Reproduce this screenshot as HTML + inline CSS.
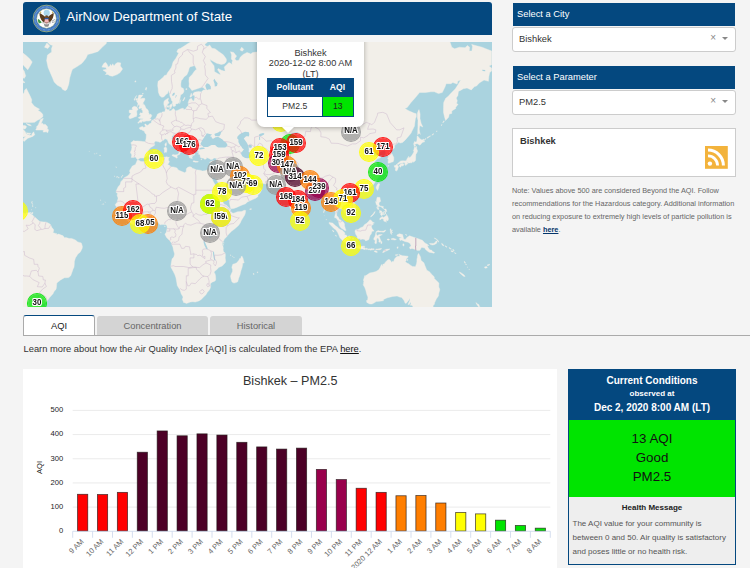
<!DOCTYPE html>
<html lang="en">
<head>
<meta charset="utf-8">
<title>AirNow Department of State</title>
<style>
html,body{margin:0;padding:0;}
body{width:750px;height:568px;overflow:hidden;background:#f4f4f4;font-family:"Liberation Sans",Arial,sans-serif;color:#222;position:relative;}
.abs{position:absolute;}
.hdr{left:23px;top:2px;width:469px;height:33px;background:#04487f;border-radius:3px 3px 0 0;}
.hdr .ttl{position:absolute;left:43.3px;top:6.1px;font-size:13.33px;color:#fff;white-space:nowrap;line-height:17px;}
.map{left:23px;top:42px;width:469px;height:265px;background:#aad3df;overflow:hidden;}
.mk{position:absolute;width:20px;height:20px;border-radius:50%;box-sizing:border-box;border:1.6px solid;background-clip:padding-box;}
.ml{position:absolute;width:40px;text-align:center;font-size:9.2px;font-weight:bold;line-height:11px;color:#111;transform:scaleX(.86);text-shadow:-1px -1px 0 #fff,1px -1px 0 #fff,-1px 1px 0 #fff,1px 1px 0 #fff,0 -1px 0 #fff,0 1px 0 #fff,-1px 0 0 #fff,1px 0 0 #fff;}
.pop{position:absolute;left:234px;top:-10px;width:107px;height:95px;background:#fff;border-radius:7px;box-shadow:0 1px 5px rgba(0,0,0,.3);}
.pop .pt{position:absolute;left:0;top:16px;width:107px;text-align:center;font-size:9.2px;line-height:10.3px;color:#333;white-space:nowrap;}
.pop table{position:absolute;left:10px;top:46px;width:87px;border:1px solid #04487f;border-collapse:collapse;}
.pop th{background:#04487f;color:#fff;font-size:8.6px;font-weight:bold;height:16.6px;padding:0;text-align:center;}
.pop td{font-size:8.6px;color:#333;height:19.4px;padding:0;text-align:center;background:#fff;border:1px solid #04487f;}
.pop td.g{background:#00e400;color:#222;}
.tip{position:absolute;left:258.5px;top:85px;width:0;height:0;border-left:6.8px solid transparent;border-right:6.8px solid transparent;border-top:6.4px solid #fff;filter:drop-shadow(0 2px 2px rgba(0,0,0,.25));}
.bar{background:#04487f;color:#fff;font-size:9.33px;line-height:23px;padding-left:4px;box-sizing:border-box;white-space:nowrap;}
.sel{background:#fff;border:1px solid #ccc;border-radius:3px;box-sizing:border-box;font-size:9.33px;color:#333;line-height:22px;padding-left:6px;white-space:nowrap;}
.sel .x{position:absolute;right:19px;top:-1px;font-size:10px;color:#888;}
.sel .car{position:absolute;right:7px;top:9.2px;width:0;height:0;border-left:3px solid transparent;border-right:3px solid transparent;border-top:3px solid #888;}
.note{left:512px;top:184px;width:226px;font-size:7.33px;line-height:13px;color:#666;}
.note a,.learn a{color:#04356b;font-weight:bold;text-decoration:underline;}
.tab{top:315px;height:20px;box-sizing:border-box;font-size:9.33px;text-align:center;line-height:22px;border-radius:3px 3px 0 0;}
.tab.on{background:#fff;border:1px solid #aaa;border-top:1.5px solid #04487f;border-bottom:none;color:#222;line-height:20px;}
.tab.off{background:#d4d4d4;color:#666;top:315.6px;height:19.4px;line-height:21px;}
.learn{left:23.5px;top:344px;font-size:9.33px;line-height:11px;color:#333;white-space:nowrap;}
.learn a{font-weight:normal;color:#111;}
.chart{left:23px;top:369px;width:534px;height:199px;background:#fff;}
.cc{left:568px;top:369px;width:168px;height:196px;background:#eeeeee;border:1px solid #04487f;box-sizing:border-box;}
.cc .top{position:absolute;left:0;top:0;width:100%;height:49.5px;background:#04487f;color:#fff;text-align:center;font-weight:bold;}
.cc .grn{position:absolute;left:0;top:49.5px;width:100%;height:77px;background:#00e400;text-align:center;color:#111;}
</style>
</head>
<body>
<div class="abs hdr">
<svg class="abs" style="left:9px;top:2px" width="29" height="29" viewBox="-14.5 -14.5 29 29">
<circle r="13.4" fill="#356fbe" stroke="#aab572" stroke-width="0.8"/>
<circle r="11.5" fill="none" stroke="#8db3e6" stroke-width="1.5" stroke-dasharray="0.7 0.6" opacity=".8"/>
<circle r="9.7" fill="#fdfdfd" stroke="#c9cf8a" stroke-width="0.5"/>
<circle cx="0.2" cy="-5.6" r="3.1" fill="#a9d5ea"/>
<path d="M-1.2 -1.5C-3.5 -3.2 -5.6 -5.2 -7 -5.4C-7.2 -2.5 -6 1.2 -3.4 3.6L-1.4 3Z" fill="#5a3a1c"/>
<path d="M1.4 -1.5C3.7 -3.2 5.8 -5.2 7.2 -5.4C7.4 -2.5 6.2 1.2 3.6 3.6L1.6 3Z" fill="#5a3a1c"/>
<path d="M-1.3 -2.6Q0.1 -4 1.5 -2.6L1.8 0H-1.6Z" fill="#6b4a2a"/>
<path d="M-6.6 -5.6l0.9 -1.6l0.6 1.8zM6.8 -5.6l-0.9 -1.6l-0.6 1.8z" fill="#c9b24a"/>
<rect x="-1.9" y="-0.6" width="4" height="1.7" fill="#2c57a6"/>
<path d="M-1.9 1.1h4v1.6q0 1.9 -2 2.6q-2 -0.7 -2 -2.6z" fill="#ee8b8f"/>
<path d="M-1.1 1.1v3.2M-0.3 1.1v3.9M0.5 1.1v3.9M1.3 1.1v3.2" stroke="#fff" stroke-width="0.35"/>
<path d="M-8.4 0.5q1.2 0.3 2 1.6q1.2 0.8 1.6 2.2q-1.6 0.9 -3 0.1q-1.2 -1.6 -0.6 -3.9z" fill="#3f9a4a"/>
<path d="M5 2.2l3.4 -1.6l0.3 0.7l-3.2 2zM5.4 3.4l3.6 -0.6l0.1 0.7l-3.5 1z" fill="#a9a9a9"/>
<path d="M-2.6 5.2q2.7 1.2 5.4 0l-0.7 2.6q-2 1 -4 0z" fill="#8d8d8d"/>
<path d="M-4 4.3h8.2" stroke="#4a3520" stroke-width="0.5"/>
</svg>

<div class="ttl">AirNow Department of State</div>
</div>
<div class="abs map">
<svg class="abs" style="left:0;top:0" width="469" height="265" viewBox="0 0 469 265"><path fill="#f2efe9" stroke="#f2efe9" stroke-width="0.4" stroke-linejoin="round" d="M114.2 118.2L115.3 118.0L118.0 119.6L119.9 119.4L121.6 119.8L124.3 118.3L126.0 117.3L128.2 116.4L131.1 115.9L135.1 115.9L137.3 115.1L140.2 115.6L144.2 114.7L144.9 115.6L146.4 115.1L145.4 116.8L145.5 118.2L146.4 119.6L145.9 120.8L144.6 122.6L146.3 123.3L148.2 124.9L150.4 124.9L154.0 126.0L155.0 127.8L156.9 128.7L159.5 129.8L161.8 130.7L163.3 129.3L163.3 126.7L164.8 125.3L166.5 124.8L168.3 125.1L169.4 126.2L170.9 126.7L173.2 127.8L177.0 128.2L179.4 129.0L182.1 128.7L184.2 127.8L186.1 128.2L186.7 128.5L187.1 131.4L187.3 132.4L187.8 134.1L188.7 135.9L189.5 137.4L189.9 138.4L190.4 139.7L191.6 141.8L192.7 144.3L192.9 145.8L194.8 147.8L195.6 150.3L195.9 153.1L196.3 154.1L197.3 155.5L198.6 156.3L199.5 159.1L200.3 161.0L201.3 162.2L203.5 163.2L205.0 165.0L206.4 166.1L207.5 167.1L207.1 168.9L207.9 169.4L209.2 171.0L210.7 171.2L212.6 170.4L214.5 169.8L218.7 169.4L221.2 168.3L222.7 168.5L222.3 171.2L221.7 172.9L220.0 175.8L218.3 178.6L217.4 180.7L215.5 183.4L213.0 185.7L211.3 187.2L208.8 189.1L206.0 191.8L204.1 194.2L203.0 195.4L201.4 197.1L200.7 198.7L199.5 200.7L199.0 202.8L199.9 203.9L200.3 206.2L200.1 207.9L200.7 210.1L202.0 210.8L202.4 213.0L202.2 215.9L202.6 218.8L202.6 220.2L201.1 222.1L199.2 223.9L195.6 225.5L194.2 227.3L191.6 229.3L191.2 230.7L192.0 231.7L192.5 233.8L192.7 235.8L192.7 237.7L192.1 238.9L189.1 240.2L187.2 241.9L187.8 243.8L187.2 246.3L186.3 248.1L184.2 250.5L183.0 252.7L181.3 254.2L178.3 257.4L175.8 258.9L173.9 259.5L172.4 260.1L169.8 259.7L167.3 260.1L163.3 261.5L162.0 260.7L160.5 260.4L160.3 259.4L159.3 257.4L160.1 255.1L158.2 251.8L157.4 249.2L156.7 247.6L154.2 243.4L153.7 240.0L152.9 235.7L151.9 232.8L150.4 229.7L148.2 225.7L147.8 224.2L148.4 220.2L149.1 216.8L150.8 215.1L151.6 212.0L150.4 207.8L149.9 204.9L148.7 202.4L148.5 201.6L147.9 200.1L146.4 198.4L145.6 197.5L143.6 195.6L141.9 192.3L143.3 190.2L143.6 189.1L143.9 187.5L144.2 185.5L143.8 183.4L142.3 182.5L141.1 182.5L138.7 182.6L137.0 182.8L135.6 181.1L134.9 179.8L133.7 178.9L131.8 178.8L130.0 178.9L127.7 179.4L125.0 180.5L121.4 182.0L119.5 181.3L117.8 181.0L114.0 181.7L110.8 182.6L108.3 181.5L104.9 179.0L103.6 177.9L101.7 176.7L100.4 174.8L99.4 172.9L97.7 171.0L96.8 170.0L95.1 168.5L93.7 167.3L93.7 165.4L92.2 162.8L94.1 160.3L95.1 156.1L94.1 153.5L94.5 151.3L93.1 150.5L93.4 148.6L95.2 144.7L97.1 142.6L97.9 139.7L100.0 137.4L100.9 135.9L104.4 133.9L106.1 132.6L107.2 130.4L106.7 129.9L106.8 128.0L108.0 126.2L109.3 124.1L111.0 123.3L112.5 122.4L113.7 119.6ZM218.9 213.9L220.0 216.3L220.8 219.4L221.2 220.8L219.8 221.0L219.5 223.3L219.1 225.3L217.9 228.9L217.0 232.8L215.7 236.2L214.7 239.8L213.0 240.6L210.9 241.1L209.0 240.0L208.1 237.1L207.5 234.2L208.1 232.4L209.4 229.7L209.6 227.7L208.8 225.3L209.8 222.3L211.7 221.7L213.4 221.0L214.9 219.6L216.2 217.8L216.4 216.8L217.9 216.3L218.1 214.7ZM186.7 128.5L189.5 128.8L190.6 128.0L191.3 126.8L191.8 125.1L192.7 122.6L193.3 121.3L193.5 118.9L193.3 117.0L194.0 116.1L192.9 116.3L191.0 115.9L189.3 117.4L187.6 117.6L186.1 116.4L183.6 115.6L183.2 117.0L181.5 117.3L180.6 116.2L179.0 115.9L177.4 115.4L177.1 113.4L176.2 112.0L175.3 112.3L176.2 110.6L176.0 109.8L176.4 109.2L174.9 109.3L175.1 108.1L174.9 107.4L176.2 106.6L174.8 106.4L174.5 106.0L171.7 105.7L170.5 106.4L170.9 107.1L171.7 107.7L170.7 107.4L170.9 108.2L169.8 108.1L169.6 107.5L168.9 106.7L168.3 107.1L168.3 108.1L168.9 109.6L169.6 110.1L168.8 110.6L168.2 110.8L169.6 111.7L170.9 112.7L171.0 113.8L170.2 113.1L169.0 113.2L169.4 114.0L170.0 114.4L169.4 114.7L168.6 114.1L168.8 115.1L169.1 116.1L169.4 116.7L168.5 115.9L168.1 116.8L167.4 115.4L166.5 115.9L166.4 114.9L165.8 113.8L165.9 112.5L166.6 112.3L166.0 112.1L165.2 111.7L164.7 110.7L163.8 109.3L163.3 108.5L162.2 107.1L162.3 104.9L162.1 103.5L160.7 102.1L159.7 101.4L158.0 100.3L156.6 99.2L155.6 98.7L154.2 97.6L153.7 95.2L152.8 94.4L151.8 95.8L151.1 94.0L151.5 93.5L151.0 93.1L148.8 94.2L149.1 95.4L148.7 96.8L149.3 97.8L151.0 98.9L151.9 101.3L153.3 102.7L154.2 103.2L156.1 103.3L155.6 104.2L157.4 105.4L159.4 106.5L160.5 107.7L160.2 108.6L159.5 108.1L158.0 107.0L156.9 108.1L156.8 109.0L157.9 110.3L156.9 111.1L156.8 112.0L155.8 113.1L155.1 112.7L155.5 111.5L156.1 110.8L155.8 109.7L155.2 108.1L154.4 108.0L153.7 107.2L153.4 106.5L152.6 106.6L152.4 106.0L151.1 105.1L149.3 104.5L148.6 103.7L147.8 102.8L146.4 102.1L145.3 100.6L144.9 99.1L144.1 97.6L142.3 96.8L141.5 97.1L140.6 98.2L139.2 98.7L138.7 99.1L138.0 100.0L136.7 100.3L135.5 99.7L134.3 99.6L132.8 99.1L131.3 100.3L131.2 101.3L131.7 102.3L131.5 103.3L129.6 104.6L127.8 105.4L127.0 106.4L125.4 108.2L124.8 109.5L125.8 111.2L124.5 112.1L124.1 113.8L122.4 114.4L121.2 116.1L118.8 116.1L117.1 116.1L116.1 116.6L115.3 117.4L114.8 117.7L113.5 116.6L113.3 115.9L112.2 114.9L110.4 115.4L108.3 115.4L108.7 113.1L108.5 111.9L107.4 111.1L107.6 109.7L108.5 107.7L108.9 105.2L108.6 103.8L108.7 102.6L107.8 100.8L109.5 99.5L110.4 98.6L112.1 99.1L114.6 98.9L118.2 99.3L119.7 99.6L121.6 99.7L122.5 99.2L123.1 96.2L123.3 93.8L123.2 92.1L122.0 91.2L121.2 89.1L119.5 88.4L119.0 87.8L117.2 87.5L116.5 86.8L116.4 85.8L117.8 85.0L119.7 84.5L120.3 85.4L121.6 85.1L122.6 85.1L122.4 84.5L121.7 82.1L123.0 82.1L123.2 83.1L124.9 83.2L125.6 82.7L126.1 81.9L127.5 81.3L128.4 80.6L128.4 79.0L128.9 78.4L130.0 78.1L131.5 77.1L132.2 76.8L133.2 75.2L134.0 73.6L134.4 72.2L135.6 71.4L137.2 70.8L138.7 70.9L139.1 70.0L140.6 69.8L141.1 70.1L141.9 69.2L142.3 67.4L141.7 65.9L141.3 63.9L140.8 62.2L140.9 59.8L141.7 58.5L144.3 56.7L145.5 56.2L145.4 57.2L144.9 58.8L146.2 60.9L144.8 61.7L143.9 63.8L143.4 63.9L143.3 66.3L144.6 67.7L146.4 67.6L146.1 69.0L147.1 69.0L148.3 68.4L149.1 67.4L150.8 66.6L151.3 67.2L152.3 69.0L154.9 68.2L157.4 66.9L158.7 66.4L160.3 66.3L160.8 67.7L163.1 66.7L163.2 65.8L165.4 63.3L165.2 60.5L166.3 57.4L168.3 56.2L169.6 58.5L170.5 59.0L171.1 58.6L171.6 56.2L171.9 53.8L170.0 53.1L170.0 51.8L171.0 50.4L172.3 50.0L175.7 49.6L178.6 50.0L179.3 49.0L180.4 48.1L182.7 48.1L182.2 47.5L179.8 45.2L177.0 45.8L172.7 47.3L168.9 48.5L167.5 46.4L165.9 44.8L166.2 41.7L165.9 39.1L166.2 35.6L169.2 32.4L171.8 28.7L173.6 27.3L172.0 23.9L171.2 23.7L167.5 24.8L166.2 26.0L165.6 28.7L163.9 32.8L161.0 34.9L159.4 37.4L158.3 38.5L157.9 41.3L157.8 42.9L158.0 45.2L160.4 46.6L161.0 48.9L160.5 50.5L159.4 52.0L157.7 52.7L157.0 56.2L156.6 57.9L156.4 60.0L155.0 61.7L153.6 61.7L152.5 62.6L152.6 63.8L151.6 64.3L150.3 64.4L150.0 63.6L149.5 62.1L149.0 61.2L149.8 60.0L148.6 58.5L148.0 56.3L147.0 54.4L146.5 51.8L146.2 51.1L145.7 48.3L145.1 49.8L144.5 51.6L143.2 52.2L142.0 53.7L140.6 54.9L138.8 55.3L136.8 53.7L136.0 51.8L135.4 50.2L135.1 46.4L134.7 43.7L134.8 41.7L135.1 39.3L137.0 38.1L138.7 36.4L140.0 35.6L141.5 33.4L143.6 33.0L144.4 30.9L146.6 28.0L148.5 25.3L149.3 22.8L150.1 19.9L152.7 16.5L154.4 13.5L155.7 11.0L153.8 10.0L155.0 7.3L157.6 6.3L161.2 4.1L164.3 1.9L166.2 0.8L170.3 -1.2L174.3 -4.1L177.9 -3.8L181.3 -2.1L184.4 0.2L181.8 2.2L182.4 3.8L184.8 4.4L186.7 3.0L188.9 6.3L192.0 6.8L195.6 9.4L200.3 12.8L203.0 16.5L203.5 18.0L203.1 19.9L201.3 21.8L198.4 22.5L193.7 21.3L190.4 19.4L186.8 17.3L188.0 19.9L191.0 23.7L191.4 27.3L191.4 29.5L194.2 31.3L196.5 32.4L197.6 32.2L196.1 30.0L194.6 27.8L195.2 26.6L198.4 28.2L200.9 29.1L202.2 29.1L201.3 25.1L204.1 22.3L206.0 20.6L208.3 21.8L209.2 22.8L209.0 20.4L209.6 18.5L208.3 17.0L208.6 13.0L207.5 9.7L210.7 10.5L212.6 13.0L213.6 14.0L211.7 17.0L213.8 18.7L215.9 18.2L217.4 15.0L220.2 12.5L224.0 10.5L226.9 11.5L227.8 12.0L229.7 10.5L233.5 10.0L237.3 11.0L239.2 9.4L239.7 4.1L242.4 3.8L247.7 6.3L248.7 7.3L251.5 9.4L254.9 12.0L256.2 10.5L254.3 5.2L252.5 2.4L252.5 -9.2L256.2 -15.5L263.5 -14.9L263.8 -6.2L263.1 2.4L262.9 7.9L264.8 13.0L262.9 19.9L259.1 20.9L261.9 21.8L265.3 18.5L265.7 15.5L267.2 10.5L270.5 9.4L272.4 15.0L274.3 15.5L272.4 11.5L270.5 7.9L266.7 7.3L265.3 2.4L265.7 -3.2L268.6 -9.2L273.3 -11.1L280.9 -7.4L283.4 -2.1L283.7 0.8L284.7 -2.1L282.8 -6.2L278.1 -18.8L296.1 -33.0L322.6 -51.1L339.7 -36.9L328.3 -18.8L337.8 -20.8L340.6 -18.8L352.0 -15.5L365.3 -18.8L370.0 -6.8L373.8 -2.1L377.6 -6.2L383.3 -6.2L389.0 -6.2L390.9 -12.3L396.6 -11.1L402.3 -11.1L409.8 -6.2L413.6 -2.7L421.2 -3.2L426.9 -0.4L428.8 5.2L431.7 6.8L436.4 5.2L442.1 5.7L444.5 3.6L446.6 5.2L446.3 8.9L448.9 8.9L449.5 4.6L448.7 2.4L453.5 3.8L459.1 5.2L462.9 6.8L468.6 8.9L468.6 22.8L466.0 23.9L468.6 26.0L468.6 29.1L466.7 30.4L465.8 34.7L465.4 39.3L461.0 38.1L456.3 40.9L453.5 44.1L451.6 44.5L448.3 47.9L444.0 46.0L440.2 46.8L438.3 47.9L435.4 49.4L434.9 53.5L433.2 56.0L434.3 58.8L433.5 61.6L435.1 62.2L432.6 65.6L432.8 66.4L428.8 68.9L428.8 71.4L426.3 72.0L425.6 75.2L422.6 78.5L421.6 75.2L420.5 70.5L420.5 65.6L420.7 60.5L422.7 56.3L425.0 54.6L428.2 50.9L432.4 46.8L435.4 42.1L437.7 38.1L434.9 38.9L434.1 42.1L429.8 40.5L427.9 41.7L423.1 41.7L422.2 44.5L419.3 50.5L415.5 51.6L411.4 49.8L407.9 49.8L402.3 50.5L396.6 50.5L391.8 56.3L388.0 60.5L384.2 65.6L381.8 66.6L386.1 68.9L388.0 69.8L390.9 71.1L393.2 71.7L393.3 74.5L392.4 76.7L391.8 81.2L391.5 84.1L389.0 88.9L388.0 91.2L384.6 95.2L382.3 97.9L379.5 100.5L377.4 101.0L375.5 100.3L373.2 102.3L371.5 103.6L371.4 106.1L369.1 107.9L367.4 108.6L367.1 110.2L368.9 111.5L369.8 113.6L370.8 115.4L370.8 117.7L370.2 119.8L368.1 120.3L367.6 120.8L365.1 121.2L365.1 118.9L365.5 117.7L364.5 115.9L365.7 115.1L365.5 114.2L363.8 113.0L361.9 112.7L362.8 111.3L362.4 109.3L361.3 108.4L358.6 109.1L356.0 110.8L355.2 109.3L357.1 106.5L355.0 105.9L354.7 106.4L352.2 108.4L350.9 110.3L348.7 110.6L348.6 112.0L351.2 113.6L351.1 114.9L353.0 114.2L354.4 113.5L355.6 114.1L357.0 114.2L357.9 114.7L357.5 115.7L354.9 116.6L353.6 117.6L352.1 119.1L351.6 120.6L353.5 121.7L354.7 124.6L356.6 127.6L356.6 129.1L354.9 130.0L354.7 130.7L356.2 131.3L356.7 131.5L356.7 133.3L356.0 134.6L354.7 135.9L353.3 138.0L352.2 139.9L351.2 141.6L350.5 142.4L349.4 143.2L346.8 145.4L344.4 146.8L342.0 147.6L340.7 147.9L338.7 148.8L337.4 149.0L334.9 149.8L334.4 151.7L333.5 150.5L333.4 149.2L332.3 149.3L330.9 149.0L330.2 149.2L327.9 150.9L327.5 151.9L326.2 152.7L325.9 154.9L327.4 156.7L329.6 159.2L330.7 160.1L331.9 161.8L332.6 164.6L333.0 166.3L332.5 167.6L332.1 168.9L330.4 170.2L328.5 171.3L327.8 171.9L327.4 172.9L325.5 173.9L324.0 174.6L324.2 172.3L324.7 171.9L323.5 171.2L321.7 170.8L320.7 169.0L319.9 167.7L318.8 167.1L317.5 166.8L316.7 166.8L316.7 165.9L316.0 165.2L315.0 165.7L314.9 167.0L314.7 168.5L313.6 171.0L313.8 173.5L315.1 174.9L315.6 175.8L316.2 177.3L317.5 177.9L318.5 178.8L319.3 179.2L321.0 180.8L321.6 182.5L321.5 183.7L322.3 186.4L323.1 188.3L322.2 188.5L321.7 188.4L320.5 187.6L319.3 186.8L318.4 186.3L317.5 185.3L316.5 183.8L316.2 183.0L315.7 180.7L315.6 179.4L315.0 178.6L313.9 177.1L312.9 175.7L311.8 176.0L311.7 174.6L312.4 172.0L312.4 170.0L312.4 167.2L311.4 164.1L310.8 161.7L310.5 159.3L309.3 158.3L308.0 159.1L306.3 160.7L304.2 160.5L304.4 158.3L304.6 156.3L304.2 155.3L302.8 153.5L301.6 152.0L299.8 149.3L299.5 147.6L298.0 147.0L297.0 148.0L295.1 148.6L292.8 148.9L291.3 149.0L290.5 149.3L289.8 151.7L288.2 152.7L286.4 153.8L283.4 156.9L281.4 158.4L281.5 159.2L279.3 160.0L278.8 160.7L277.3 161.3L277.4 163.3L277.7 165.9L276.8 168.2L276.8 171.4L275.8 171.5L275.1 172.5L275.2 173.4L273.6 174.2L272.5 175.6L271.2 174.8L270.6 174.1L270.0 172.0L269.0 169.5L268.3 168.4L267.2 166.3L265.9 162.6L265.3 161.2L264.4 158.3L263.5 154.4L263.5 151.5L263.2 150.0L263.1 147.8L262.3 148.7L260.0 150.9L258.8 150.5L257.4 148.9L256.1 147.7L258.1 147.1L258.5 146.2L256.9 146.5L255.8 144.9L253.4 144.3L252.4 142.4L251.6 141.2L248.0 141.6L245.7 141.5L243.6 141.7L242.5 141.9L240.3 141.4L237.3 141.2L235.0 140.6L233.5 138.2L232.1 137.5L229.5 138.7L226.9 138.4L224.1 136.1L221.8 133.6L221.2 132.3L218.7 130.7L217.5 131.4L216.3 132.6L217.2 134.6L219.6 137.8L220.5 139.0L220.6 140.8L221.6 142.5L221.7 141.0L222.5 139.6L223.2 141.4L223.2 142.7L222.7 143.5L225.3 143.9L228.5 143.2L230.3 141.5L231.5 140.3L232.2 139.2L232.2 140.8L232.3 141.8L233.0 143.4L236.4 144.9L238.3 147.1L238.8 147.2L237.9 149.4L236.7 151.5L234.8 153.0L235.0 154.5L232.7 156.3L230.3 157.3L228.0 158.3L224.4 159.9L222.6 161.8L218.6 163.2L216.4 164.2L213.6 165.4L210.7 166.5L207.9 166.8L207.4 165.5L206.8 162.6L206.6 161.6L206.4 159.5L206.1 158.5L203.3 154.1L201.8 152.0L199.6 149.2L199.4 146.6L197.6 143.9L195.9 141.9L194.5 139.4L193.1 137.0L191.8 135.4L191.0 135.7L191.8 132.4L190.4 136.0L190.3 136.2L189.1 135.1L188.2 133.4L187.1 131.4ZM114.6 81.0L115.0 80.6L115.7 80.0L116.9 78.2L117.6 77.6L119.5 77.6L120.3 76.7L119.3 76.8L117.8 76.4L117.2 76.5L115.7 76.2L115.3 75.5L116.5 74.9L117.6 73.9L117.7 73.0L116.4 72.7L117.2 71.6L116.7 71.1L117.2 70.8L118.2 71.1L119.5 70.9L119.7 70.6L119.7 70.0L119.6 69.5L120.0 68.5L119.2 68.5L118.6 67.2L119.0 65.9L119.7 65.8L118.6 66.1L117.7 66.3L116.2 66.7L115.7 65.9L116.6 64.1L116.1 62.6L115.3 62.8L114.5 64.6L114.7 63.3L115.0 60.9L113.6 59.8L114.3 58.8L114.6 57.8L114.6 56.3L115.3 55.5L115.3 54.6L115.9 53.1L118.8 53.1L119.6 52.9L119.5 53.7L118.5 54.9L117.8 55.8L117.4 57.1L118.1 56.7L119.1 56.3L121.6 56.3L122.0 57.1L121.5 58.3L120.8 59.8L119.9 60.7L120.5 61.2L119.3 62.2L120.7 62.2L121.6 63.1L122.7 65.6L123.1 66.6L124.3 67.2L125.2 68.5L125.6 70.1L124.8 69.8L125.3 70.3L126.1 71.6L125.8 72.4L126.2 72.7L126.3 72.2L127.9 72.2L128.7 73.3L128.7 73.8L128.0 75.3L127.6 75.8L126.8 76.5L126.3 76.8L128.1 77.0L128.0 77.9L127.2 78.5L126.5 78.7L125.9 79.0L125.1 78.8L123.9 79.1L123.3 78.8L122.9 79.4L122.5 79.1L121.8 79.1L121.7 79.4L120.8 79.7L119.8 79.1L119.0 79.4L118.8 80.0L118.5 80.6L117.5 80.2L116.6 80.3L115.8 80.7L115.5 81.3L114.9 80.9ZM111.4 64.3L113.7 64.9L114.6 66.6L115.1 67.6L113.6 68.9L113.8 70.9L114.0 72.2L113.4 74.5L112.1 74.7L109.9 75.8L106.8 76.8L105.7 74.9L107.0 73.3L106.6 73.5L108.3 71.4L106.2 70.6L106.2 68.9L106.4 68.0L109.1 67.9L109.7 67.2L108.9 66.6L109.7 65.1ZM111.7 58.5L112.3 56.3L113.6 53.5L112.9 54.6L111.9 56.0L111.2 57.8ZM112.7 57.4L113.6 56.3L114.4 58.1L113.5 58.6ZM119.1 51.8L120.1 51.3L120.3 52.0ZM122.4 47.5L123.1 45.2L123.7 46.0L123.1 48.3ZM111.6 39.7L112.7 38.7L112.9 40.1ZM82.4 32.6L83.7 31.1L82.9 30.0L79.9 28.0L83.7 27.3L82.7 25.5L78.9 25.1L80.3 22.3L81.4 20.9L82.9 20.6L84.6 23.2L85.0 25.1L86.9 24.1L87.3 22.3L88.6 23.9L89.7 21.8L91.1 24.1L92.6 21.8L94.7 20.4L97.7 20.9L97.3 23.9L99.6 26.9L97.1 30.6L94.1 32.6L89.4 34.3L86.9 33.7L84.8 32.4ZM42.2 48.7L39.7 47.5L38.2 45.2L34.4 43.3L31.2 40.1L29.6 36.0L27.4 30.9L25.1 25.5L23.6 18.5L24.5 13.0L28.7 10.0L28.5 6.8L29.6 3.6L26.8 2.4L23.0 -1.5L21.1 -9.2L21.1 -29.3L85.6 -29.3L84.6 -9.2L83.3 1.6L79.9 4.6L75.1 9.4L70.4 11.0L64.7 12.5L62.8 16.5L59.0 21.3L54.1 24.6L49.5 27.3L48.6 29.5L46.7 36.0L45.8 42.1L43.9 47.5ZM21.5 5.2L23.9 1.1L26.8 4.1L24.9 6.5ZM-16.8 80.6L-0.5 80.6L4.8 80.4L8.2 80.6L11.6 80.3L14.5 78.2L17.1 77.0L19.2 75.2L20.0 74.4L19.6 72.0L17.3 69.8L14.8 68.2L16.6 67.2L13.1 65.3L11.2 64.1L8.4 60.5L8.8 57.8L6.9 53.5L5.0 49.8L3.3 46.4L1.6 48.3L1.0 50.9L-0.7 52.4L-16.8 53.5ZM-16.8 84.1L-0.7 83.5L2.1 83.4L3.7 84.7L2.1 87.0L-0.3 86.8L2.1 89.5L3.1 91.8L4.4 92.5L6.5 93.3L9.0 93.6L8.8 92.0L10.7 89.8L11.4 92.0L11.8 92.8L9.7 94.4L4.8 96.3L1.0 99.5L0.1 98.4L0.6 96.3L3.1 94.4L1.2 94.7L-1.7 95.2L-16.8 100.5ZM3.3 90.7L5.9 91.2L7.8 91.3L6.9 92.5L4.0 91.7ZM3.1 81.5L6.9 82.4L8.4 83.8L5.9 83.4ZM20.3 76.4L19.2 79.1L17.9 81.8L19.2 80.9L21.1 82.9L21.7 82.1L23.0 82.9L24.7 85.0L23.8 87.5L24.9 86.7L25.5 88.2L24.7 90.7L23.4 90.1L23.0 88.9L22.6 90.1L20.0 90.1L20.7 88.4L19.2 88.1L16.2 88.1L13.1 88.1L12.8 87.3L14.3 85.5L13.1 85.3L14.8 83.5L15.4 82.4L16.6 79.7L17.5 77.6L19.4 76.4ZM-16.8 -3.2L-3.5 4.6L-0.7 10.5L3.1 13.5L6.9 17.0L9.2 19.9L7.8 22.8L4.8 27.8L2.1 25.1L-0.7 21.8L-3.5 19.9L-1.7 25.1L1.2 29.1L2.7 33.9L1.2 36.4L-4.5 33.0L0.2 38.9L2.1 40.5L-0.7 40.9L-16.8 38.1ZM-16.8 170.0L-3.5 171.0L0.2 170.8L2.1 171.7L3.7 171.1L5.5 170.7L8.0 170.6L6.9 171.6L9.7 172.9L10.7 174.6L12.0 175.2L15.1 178.1L16.9 179.6L20.7 179.9L23.0 180.0L26.2 181.6L27.7 182.8L28.7 185.3L30.6 187.6L30.6 189.3L29.8 190.6L32.5 191.4L33.6 191.6L33.8 192.7L35.6 192.1L38.2 193.1L40.1 193.8L41.4 195.7L43.1 195.6L46.1 196.5L48.6 196.4L52.4 198.0L54.7 199.9L58.2 200.9L58.7 202.0L59.4 204.5L59.2 206.3L57.7 209.4L56.4 211.0L55.1 211.8L52.4 215.9L51.4 219.4L51.3 222.6L51.0 225.2L50.1 226.9L49.0 230.3L47.7 233.8L45.8 235.6L43.5 235.7L41.4 235.8L37.6 237.9L33.8 241.0L33.4 245.5L33.0 247.4L31.2 249.2L30.0 251.8L26.6 255.6L24.1 258.9L21.2 261.8L18.8 261.7L15.7 260.7L14.7 261.0L15.6 261.6L17.1 263.0L17.9 265.0L16.3 269.0L15.4 273.9L-16.8 273.9ZM8.0 171.8L8.8 170.6L9.9 170.4L9.7 171.7ZM8.2 160.3L9.3 159.5L9.2 160.4ZM9.3 163.2L10.0 162.6L10.0 163.4ZM8.8 161.6L9.3 161.0L9.3 161.8ZM9.5 164.6L9.9 164.0L9.9 164.8ZM12.3 165.9L12.7 165.5L12.7 166.0ZM8.2 168.1L8.6 167.6L8.6 168.1ZM3.3 170.2L4.4 169.7L4.4 170.2ZM395.6 211.4L397.5 214.9L398.1 218.4L400.9 220.8L401.9 223.5L403.8 228.2L406.5 229.7L408.3 232.0L411.2 234.8L411.4 236.7L412.3 237.6L414.4 239.6L415.9 241.0L415.8 245.1L416.5 246.6L416.8 247.7L415.8 251.3L415.4 253.9L413.3 257.1L412.3 259.3L411.6 260.7L411.4 262.2L410.2 263.6L409.8 267.8L403.0 271.7L400.2 269.5L397.5 271.1L393.9 269.9L391.8 269.0L390.6 266.3L389.6 264.0L388.8 263.2L387.3 263.3L388.0 261.7L387.4 260.1L386.9 260.8L386.6 262.2L385.0 262.6L386.1 259.9L386.3 259.4L387.1 257.8L386.7 256.2L386.3 257.5L385.1 258.9L383.1 261.4L382.0 260.9L381.2 258.8L379.9 256.9L378.8 255.4L376.5 255.1L374.1 254.0L369.8 254.4L364.3 255.8L360.5 257.4L360.4 258.7L356.6 259.3L353.1 259.5L351.8 260.5L349.0 262.0L346.7 261.9L343.8 260.4L343.5 258.6L344.7 258.0L344.9 255.1L344.0 252.9L343.5 251.3L342.7 248.1L341.9 245.7L340.0 242.4L341.0 242.5L340.4 241.2L340.9 239.8L340.4 237.9L341.1 236.0L341.9 233.4L342.1 234.8L342.7 233.6L343.7 233.1L346.7 231.0L350.3 230.3L353.0 229.5L355.8 227.7L357.1 225.6L358.5 222.5L359.8 224.3L359.8 222.1L361.3 222.1L362.2 220.4L364.0 218.4L366.0 217.3L367.9 219.0L368.3 220.6L369.3 219.5L370.8 219.4L371.2 217.8L371.9 216.6L373.5 214.8L374.8 214.3L376.5 214.3L376.8 213.0L375.7 212.4L377.6 213.0L379.5 213.7L382.3 213.9L384.8 214.3L385.2 214.6L384.2 216.3L383.3 216.8L383.1 218.8L382.2 219.8L384.4 221.3L385.2 221.5L387.1 222.9L389.4 224.4L392.4 224.7L393.5 221.7L393.9 219.8L393.9 217.6L394.4 215.2L394.5 213.7L395.1 212.0ZM372.1 213.0L374.4 212.4L374.8 213.1L373.1 213.6ZM384.1 217.6L385.0 217.4L384.8 218.4L384.1 218.2ZM374.3 192.7L376.5 191.7L379.6 192.6L380.1 194.8L380.8 197.3L382.3 197.4L384.2 195.2L386.7 193.8L388.5 194.5L392.2 195.8L393.3 196.1L397.8 197.7L399.4 198.3L401.9 200.9L404.2 202.2L405.8 203.5L404.2 203.8L405.1 205.6L406.4 207.2L407.0 207.9L408.5 208.1L409.7 209.5L411.6 210.5L411.1 211.2L408.9 210.7L406.1 210.3L404.4 209.1L402.3 207.2L401.9 206.1L399.4 205.5L398.5 205.6L397.5 207.0L397.0 208.2L394.7 208.5L391.6 207.2L389.0 206.4L387.1 207.0L386.5 205.1L388.2 203.9L387.1 201.4L385.2 200.3L384.2 200.1L381.8 199.4L379.5 198.4L378.9 197.9L377.2 198.6L376.3 196.6L378.0 195.7L379.3 195.4L377.6 195.2L375.7 194.8L373.8 193.7ZM406.6 201.4L408.9 201.4L410.8 201.4L412.3 200.3L413.1 199.0L414.2 199.2L413.6 201.3L411.7 202.4L409.8 203.0L407.9 202.6L406.8 202.0ZM411.2 195.9L413.3 196.9L415.2 198.6L415.7 200.1L415.0 199.5L413.6 197.6L411.7 196.5ZM418.6 201.3L419.9 202.2L421.0 203.7L419.9 203.7L418.9 202.4ZM422.2 203.7L424.1 204.9L423.7 205.3L422.2 204.3ZM426.0 205.5L428.4 207.0L427.9 207.2L426.0 206.0ZM428.0 208.7L430.3 209.1L429.8 209.9L428.2 209.5ZM429.9 207.0L431.3 208.9L430.7 209.1L429.9 207.8ZM431.3 210.6L433.2 211.4L432.2 211.6ZM441.3 219.2L442.5 220.8L441.7 221.0ZM442.5 221.7L443.6 222.7L442.8 222.7ZM444.4 224.9L444.9 225.3L444.4 225.3ZM446.3 227.1L446.4 227.5L445.9 227.5ZM436.4 229.9L438.3 230.9L441.1 233.0L442.1 234.4L440.9 234.4L438.7 232.8L436.8 230.9ZM461.6 224.9L463.5 224.5L464.3 225.7L462.6 226.2L461.6 225.7ZM464.1 223.1L466.5 222.3L466.5 222.9L464.8 223.7ZM452.9 260.5L453.6 261.0L454.4 261.9L455.9 262.6L456.5 264.7L458.2 265.7L459.0 267.8L462.9 268.0L462.9 271.4L454.4 271.4L456.5 269.0L455.9 265.7L455.2 264.3L453.8 262.4ZM346.9 177.7L348.6 178.8L349.4 179.9L351.4 180.9L349.7 181.5L350.3 182.6L349.0 182.9L348.4 184.7L349.2 186.8L351.1 189.1L349.0 189.3L348.2 192.1L347.0 193.4L346.3 195.7L345.9 197.5L345.4 197.8L342.7 198.9L341.6 197.5L339.7 197.1L337.4 197.6L337.2 196.7L334.4 196.5L334.1 194.2L332.9 192.5L332.4 191.0L331.9 189.1L333.3 187.1L334.7 187.8L336.5 186.4L338.0 185.5L339.8 184.9L341.6 182.6L343.4 181.5L345.5 179.6ZM306.1 180.5L309.6 181.1L311.2 182.5L312.6 183.8L314.7 185.3L315.8 186.6L317.8 187.8L319.2 188.3L320.7 189.7L321.9 191.0L321.7 192.9L323.4 192.9L324.3 195.4L326.4 196.7L326.2 199.2L326.1 202.0L325.1 201.4L323.8 202.2L322.4 200.9L319.3 198.2L316.9 195.7L315.7 192.8L314.7 190.6L312.8 187.7L310.9 186.4L307.6 183.1L306.3 181.7ZM324.9 194.6L326.4 193.8L327.7 195.9L327.4 196.7L326.0 195.9ZM329.4 196.1L330.6 196.1L330.6 197.1L329.6 197.1ZM309.5 188.3L311.0 189.3L310.7 189.9L309.5 188.9ZM312.4 192.9L313.5 194.0L313.1 194.4L312.4 193.5ZM326.4 202.2L328.0 202.6L330.0 202.9L330.8 203.0L331.2 203.7L332.3 204.0L334.8 204.2L335.3 203.3L336.8 203.6L337.9 204.1L339.2 204.7L340.6 205.6L341.6 205.6L342.3 206.6L342.3 207.7L339.7 206.9L336.8 206.8L334.6 206.2L332.1 205.6L331.1 205.7L329.3 205.6L327.4 205.0L327.4 204.3L325.1 203.9L326.0 203.2ZM339.1 204.3L341.4 204.1L341.8 204.5L339.3 204.7ZM342.5 206.5L343.9 206.3L344.8 207.0L343.9 207.8ZM345.2 207.0L346.5 206.8L346.5 207.9L345.4 207.8ZM346.9 207.2L348.8 206.4L349.7 206.8L351.2 206.8L351.1 207.7L349.2 207.8L347.3 208.2ZM352.8 207.1L354.9 207.0L358.3 206.4L358.6 206.9L356.7 207.8L353.9 207.8L352.8 207.7ZM351.1 209.1L353.0 208.8L354.5 210.1L353.3 210.5L351.4 209.6ZM359.6 210.6L360.5 208.8L362.4 207.5L365.3 207.1L366.8 207.0L365.3 208.1L362.4 209.3L360.5 210.6ZM362.2 188.2L360.5 189.1L358.6 189.2L356.7 189.1L354.9 188.5L354.5 189.0L353.0 189.7L352.6 192.3L351.8 194.8L350.9 196.0L350.8 197.6L352.2 198.6L351.8 200.8L352.2 201.6L353.3 201.5L353.7 200.1L353.6 199.5L353.7 196.7L354.7 196.0L355.0 196.0L355.8 197.6L356.0 198.7L355.8 199.9L356.7 200.2L357.7 199.4L357.9 198.5L357.3 197.3L356.7 195.7L356.4 194.7L355.5 194.8L356.7 194.0L358.6 192.9L359.4 192.7L357.7 192.4L355.8 192.7L354.4 193.7L353.5 192.7L353.1 191.0L353.9 190.1L355.8 190.1L358.7 190.1L360.5 190.2L361.5 189.9L362.8 188.3ZM357.9 199.4L359.0 199.7L358.8 201.4L357.9 201.6L357.7 200.5ZM367.2 187.0L368.1 186.8L367.9 188.7L369.5 188.2L368.5 189.5L369.8 190.4L368.1 190.2L368.9 192.5L367.7 191.6L367.4 189.3ZM367.9 197.1L370.0 196.3L373.4 197.3L371.9 198.0L369.1 197.6ZM364.3 197.1L365.9 196.9L366.6 197.6L365.3 198.3L364.3 197.8ZM379.9 201.8L381.0 202.0L380.8 204.1L379.9 203.7ZM374.2 205.1L375.1 204.7L375.0 206.2L374.0 206.2ZM382.3 192.5L383.9 192.9L383.3 193.4ZM356.1 155.6L356.9 155.3L357.3 157.7L357.7 159.3L355.9 160.7L356.0 162.8L357.3 164.0L358.6 164.2L360.4 164.6L360.1 165.8L360.7 167.0L359.8 166.3L358.5 165.2L357.7 164.4L356.2 164.4L354.9 164.7L354.1 164.5L354.8 163.1L353.8 163.3L353.4 162.6L352.8 160.7L352.6 159.5L353.5 160.2L353.5 159.1L353.7 157.2L354.0 155.9L354.5 155.1ZM353.7 165.3L355.8 165.7L355.7 167.5L354.9 167.6L354.1 166.3ZM347.6 175.0L349.2 173.9L351.1 171.9L352.2 169.4L351.4 170.0L350.1 171.9L348.0 174.1ZM356.6 168.3L357.9 169.0L358.8 169.0L358.5 170.2L356.7 171.1L356.7 170.0ZM357.5 172.0L358.8 170.1L359.6 170.4L359.0 173.7L357.9 173.1ZM359.4 173.0L360.6 169.6L360.5 171.4ZM360.2 172.7L361.5 171.7L361.7 172.5ZM361.3 169.4L362.4 169.8L362.8 171.4L362.1 171.9L361.9 170.6ZM361.1 167.1L363.0 167.0L363.8 169.6L362.4 169.4L362.2 168.5ZM363.4 172.3L364.9 174.8L365.5 177.1L364.7 179.0L363.6 177.5L363.2 179.6L363.2 180.4L362.7 179.4L360.9 179.2L360.5 177.7L360.9 177.3L359.4 176.9L359.5 176.2L358.3 176.9L356.8 177.9L356.9 176.2L358.1 175.4L359.3 174.6L360.2 175.6L360.9 175.3L361.8 174.8L362.4 173.9L363.4 173.9ZM355.9 141.4L356.7 142.0L356.0 144.1L355.6 146.0L354.6 148.4L353.3 146.4L353.1 144.9L354.3 142.8L355.0 141.8ZM334.6 152.1L335.9 152.9L334.9 154.7L333.2 155.9L331.5 155.3L331.3 153.7L332.7 152.5ZM277.1 172.3L279.4 174.7L280.3 176.4L280.7 177.7L279.2 179.4L278.2 179.8L277.5 179.6L276.8 177.9L276.7 175.8L276.9 173.9ZM373.6 122.5L374.6 121.5L377.7 118.9L379.9 118.8L382.3 118.9L383.3 118.4L384.4 116.3L385.8 114.2L385.6 116.0L387.6 115.0L389.1 113.1L390.5 110.8L391.0 108.9L390.3 108.4L390.9 107.6L391.5 105.1L392.3 106.0L392.8 104.5L393.6 104.6L393.7 106.7L394.6 109.0L393.9 110.8L392.8 112.4L392.7 115.4L392.5 118.4L390.6 120.3L390.5 118.9L390.3 119.7L389.7 119.4L388.7 121.0L387.8 120.2L387.5 121.0L386.5 120.9L385.2 121.0L384.9 120.0L384.3 120.8L385.0 121.7L383.7 122.3L382.8 123.6L381.7 121.9L382.2 120.9L380.8 120.6L379.4 121.1L376.6 121.6L376.1 122.1L374.8 122.4ZM392.3 103.7L391.1 104.6L391.1 103.3L390.6 101.9L391.5 99.6L392.8 100.0L393.4 99.9L394.0 98.0L394.1 94.2L394.6 93.9L397.2 97.0L399.0 97.9L401.0 97.0L400.6 98.9L401.9 99.6L399.2 100.6L397.0 103.2L396.1 102.7L393.9 101.5L392.8 102.3L391.8 101.8L391.5 102.6L392.8 103.6ZM373.7 122.6L375.1 124.1L375.7 124.9L375.1 125.7L374.7 127.1L374.4 128.2L373.2 129.1L372.5 128.6L372.3 126.9L373.1 125.8L371.6 125.2L371.4 124.3L371.0 123.9L371.8 123.5L372.7 123.3ZM375.8 123.9L377.0 122.7L377.6 122.1L379.6 121.6L380.7 121.9L380.9 122.7L379.9 124.1L378.7 123.5L377.6 125.2L377.0 124.9L376.7 124.2ZM396.0 67.6L397.1 72.0L397.0 76.7L398.1 81.2L399.4 84.1L399.8 85.0L396.8 83.5L396.2 87.0L396.6 89.8L397.3 92.4L396.2 90.9L394.7 92.8L394.7 89.6L394.9 85.5L394.9 81.2L395.0 78.5L394.3 75.2L394.5 71.1L395.2 68.9ZM401.3 98.4L403.2 96.6L402.6 96.6L401.3 97.9ZM404.2 96.3L407.6 93.9L407.0 93.9L404.2 95.5ZM408.9 93.3L410.8 92.0L410.4 91.7L408.9 92.8ZM419.9 80.9L421.4 79.1L420.8 78.8L419.9 80.3ZM413.6 89.8L414.2 88.9L413.6 88.9ZM418.4 83.8L419.1 82.4L418.6 82.7ZM364.7 124.0L366.0 123.5L366.0 124.0L364.9 124.2ZM149.0 113.0L150.7 112.6L151.9 112.9L155.0 112.4L154.0 114.2L154.4 115.3L154.0 116.2L152.4 115.3L151.2 114.7L149.0 113.5ZM140.9 105.9L142.8 105.0L143.6 105.9L143.9 107.1L143.8 108.4L143.5 110.3L142.7 110.1L141.8 110.8L141.3 110.3L141.5 108.4L141.1 106.7ZM143.2 100.5L143.3 101.3L143.5 102.8L143.0 104.1L142.8 104.6L141.9 103.3L142.0 101.7L143.0 101.3ZM170.0 118.9L171.1 118.8L173.0 119.3L175.3 119.6L175.1 120.1L172.4 120.2L170.0 119.5ZM186.7 120.0L187.8 119.7L188.0 119.3L188.9 119.3L191.0 118.4L189.8 119.8L189.2 120.3L188.0 121.0L186.8 120.6ZM130.0 109.2L131.3 108.2L131.9 108.9L131.2 109.8L130.3 109.3ZM132.6 108.0L133.6 108.2L133.4 108.6L132.6 108.2ZM127.7 110.7L128.4 110.3L128.2 110.9ZM169.0 110.8L169.8 110.6L171.3 111.5L172.0 113.0L171.3 112.7L170.2 111.5ZM177.9 117.5L178.9 116.7L178.7 117.5L178.1 118.0ZM174.5 110.1L175.5 109.7L175.8 110.4L174.7 110.6ZM146.6 63.3L147.6 62.4L148.7 61.9L149.3 63.3L148.5 64.9L148.0 65.8L146.6 64.9ZM144.0 63.9L145.3 63.6L145.9 64.6L145.3 65.6L144.2 64.9ZM146.3 66.3L148.0 66.4L148.3 65.9L146.4 65.8ZM159.7 58.8L160.3 57.8L161.4 55.6L162.0 55.5L161.1 57.8L160.1 59.0ZM156.5 61.6L157.8 57.6L157.4 58.8L156.7 61.2ZM166.9 54.2L167.5 53.3L169.4 53.1L169.0 54.0L167.5 55.3ZM167.5 52.0L168.6 51.5L169.0 52.4L168.1 52.7ZM162.6 47.2L163.9 46.4L163.9 47.7ZM217.0 7.9L218.7 5.2L220.8 7.3L219.3 9.2ZM236.3 1.3L238.2 -0.9L240.1 2.4L238.8 4.1ZM93.4 134.9L94.7 134.5L94.1 135.5ZM95.4 135.3L96.2 135.3L95.8 136.2ZM98.3 135.4L99.0 134.1L99.0 135.2ZM99.2 133.5L99.9 133.1L99.8 133.7ZM91.3 133.9L91.7 133.9L91.6 134.6ZM80.4 161.6L80.9 162.2L80.6 162.4ZM77.4 158.0L78.0 158.1L77.8 158.4ZM79.0 162.3L79.3 162.2L79.2 162.6ZM81.8 159.9L82.4 160.1L82.2 160.3ZM76.4 113.4L77.7 113.4L77.2 113.7ZM71.4 111.7L72.2 111.9L71.7 112.1ZM73.5 111.1L74.1 111.2L73.8 111.4ZM66.1 109.3L66.4 109.3L66.2 109.6ZM92.7 125.0L93.7 125.2L93.3 125.5ZM226.5 167.0L227.8 166.7L228.7 167.0L227.8 167.4L226.9 167.4ZM199.7 201.9L200.0 202.0L200.4 203.2L199.9 203.0ZM200.6 200.3L201.0 200.5L200.8 201.4L200.6 201.1ZM207.4 212.8L207.9 213.1L207.7 213.7ZM210.8 215.3L211.2 215.5L210.9 215.9ZM209.3 214.1L209.8 214.3L209.6 214.6ZM230.2 231.6L230.8 231.5L231.2 232.2L230.5 232.5ZM234.2 230.1L234.8 229.8L234.9 230.5L234.2 230.7ZM301.2 165.0L301.9 165.5L301.8 168.1L301.3 169.0L300.8 170.8L300.5 170.4L301.0 168.5L301.2 166.5ZM303.1 177.3L303.6 177.7L303.3 178.1ZM301.3 173.4L301.5 173.6L301.3 173.7ZM141.4 183.9L142.3 184.0L141.9 184.8ZM137.7 190.2L138.2 190.5L137.8 190.9Z"/><path fill="#aad3df" d="M180.6 105.0L181.5 105.1L184.9 104.9L185.7 104.5L188.5 103.1L192.1 103.0L194.2 104.9L195.6 105.4L197.3 105.6L200.7 105.6L202.2 105.5L204.3 104.0L204.4 102.7L203.1 100.5L200.7 98.9L199.5 97.6L197.1 96.0L196.1 95.5L195.0 94.8L194.6 94.6L194.4 95.1L192.5 95.2L191.8 95.8L190.2 96.7L188.9 96.3L188.6 94.7L187.0 94.3L189.1 92.5L187.8 92.3L185.7 91.7L183.7 91.2L183.2 92.3L181.7 94.7L179.7 97.4L178.4 100.0L177.5 101.8L178.5 103.3ZM194.8 94.3L196.3 94.3L197.5 92.5L198.0 90.6L199.9 89.2L197.8 89.5L196.5 89.6L195.2 90.5L192.3 91.4L191.4 92.0L191.8 93.3L192.5 94.3L194.6 94.0ZM176.0 107.0L177.5 107.4L178.5 107.2L180.6 107.1L182.1 106.2L180.5 105.6L178.5 105.5L177.5 105.7ZM216.4 92.5L218.3 91.2L222.1 89.8L224.0 90.1L225.9 90.3L226.3 92.5L225.9 94.4L225.0 94.2L223.1 94.3L220.8 96.6L222.4 98.8L224.0 101.0L225.1 103.3L225.7 105.6L225.9 108.1L225.5 109.6L226.9 110.6L227.6 114.2L227.8 115.6L225.0 116.3L222.1 116.1L219.3 114.3L218.1 112.0L218.3 110.1L219.1 109.8L220.9 107.2L219.5 106.6L218.3 104.4L217.0 103.0L215.6 100.6L215.3 98.7L215.7 97.9L214.1 96.3L214.5 94.4L215.7 93.3ZM225.7 103.3L227.0 102.8L228.9 103.6L228.7 105.6L227.0 106.1L225.7 105.1ZM235.8 92.8L237.3 91.7L240.1 90.9L241.5 91.7L240.7 92.8L238.2 93.9L236.5 94.2L236.0 95.8L236.3 97.9L237.1 97.9L237.1 95.2ZM264.8 95.2L266.1 93.9L268.6 90.9L272.4 90.6L275.2 90.3L275.6 91.4L272.4 91.6L268.6 91.7L266.9 94.7L265.7 95.8ZM322.0 76.4L323.8 75.6L326.4 73.9L329.3 72.0L331.1 69.5L332.5 66.6L333.8 62.9L332.9 62.9L331.3 66.3L329.4 69.5L327.2 72.0L325.1 74.5L322.6 77.0ZM184.0 48.3L185.1 47.5L187.8 47.2L187.8 44.5L186.1 42.1L183.8 41.3L182.3 43.7L183.0 46.0ZM191.8 44.5L194.0 44.1L194.6 41.3L192.7 38.9L191.4 36.8L190.4 38.5L191.6 41.7ZM148.9 53.5L150.4 53.8L151.9 52.0L151.4 50.5L150.1 51.3ZM152.1 56.0L153.1 55.3L153.7 53.1L152.9 53.1L152.5 54.9ZM185.5 191.9L187.0 190.6L189.5 190.4L190.4 191.4L190.1 192.9L189.5 194.8L188.4 195.7L187.2 196.1L185.9 195.7L185.5 193.8ZM180.8 197.5L181.7 197.8L182.1 200.5L183.4 203.4L184.6 206.2L184.2 207.8L183.2 206.8L181.5 203.5L180.6 200.5ZM189.9 209.3L191.0 210.1L191.4 213.0L191.8 215.5L192.3 218.4L191.2 218.2L190.6 215.5L190.1 212.6ZM193.5 182.5L194.2 182.8L194.8 185.3L194.2 186.3L193.7 184.7ZM459.1 27.8L462.2 28.0L462.2 29.3L459.7 29.1ZM151.0 165.4L152.7 165.2L153.3 166.3L152.1 166.9Z"/><path fill="none" stroke="#c9b3cb" stroke-width="0.55" stroke-linejoin="round" opacity=".85" d="M121.2 119.8L122.2 123.1L123.1 126.0L119.9 126.9L118.6 129.1L116.1 130.7L112.3 132.2L109.0 134.1L109.0 137.2M109.0 137.2L109.0 139.9L102.6 139.9L102.6 145.2L100.7 146.2L100.7 149.6L93.3 149.6M109.0 136.4L100.4 136.4M109.0 137.2L116.2 142.0L127.7 150.1L128.8 151.7L131.5 152.7L131.7 154.3L133.5 154.0L136.4 153.4L139.6 150.6L148.2 145.1M148.2 145.1L144.4 142.4L143.2 139.5L144.2 136.7L144.0 135.0L143.4 130.9L142.5 128.0L141.1 125.8L139.6 122.8L140.9 120.8L141.1 118.4L141.7 115.6M143.4 130.9L144.9 127.6L147.2 125.8L147.2 124.3M116.2 142.0L112.9 142.0L115.0 159.3L115.3 161.2L107.8 161.2L105.1 161.4L103.6 161.0L102.3 162.6M102.3 162.6L100.2 160.1L97.9 159.1L95.1 159.3L94.1 160.2M102.3 162.6L103.8 167.3L99.4 166.8L93.7 167.4M93.5 165.0L97.0 164.6L99.2 165.2L97.0 165.7L93.5 165.9M99.4 166.8L99.4 168.7L97.0 170.0M103.8 167.3L108.3 167.3L109.7 170.0L110.2 171.6L110.9 175.0L109.7 176.5M100.2 173.8L101.7 172.1L104.2 171.9L105.3 173.8L105.9 174.8L107.6 176.9L109.7 176.5L109.3 178.6L111.4 180.0L111.1 182.7M105.9 174.8L103.6 177.8M110.2 171.6L113.6 170.8L115.0 171.2L115.3 168.5L117.1 166.7L119.7 165.0L121.6 163.8L124.1 162.1L125.8 162.3L127.9 161.6L132.0 161.4L133.5 159.1L133.5 154.0M115.0 171.2L116.5 172.5L120.2 172.7L120.3 175.8L119.3 178.3L120.1 181.3M120.2 172.7L120.0 170.0L125.1 169.8L126.3 171.4L126.5 175.4L126.7 178.1L127.7 179.4M127.1 170.0L128.1 173.3L128.5 177.9L128.5 179.2M125.1 169.8L127.1 170.0L130.0 168.3L129.4 166.7L127.2 165.4L125.8 162.3M130.0 168.3L132.2 168.7L132.6 171.0L130.6 173.9L130.5 178.8M132.2 168.7L133.2 165.2L138.5 166.1L141.5 166.3L144.4 165.5L149.1 165.9L151.2 164.8M148.2 145.1L152.3 147.0L153.8 146.2L155.7 145.2L170.9 153.3L170.9 152.3L172.8 152.3L172.8 148.2M153.8 146.2L155.6 151.5L154.8 156.3L154.8 158.5L151.0 163.2L151.2 164.8L152.1 166.1M172.8 148.2L172.8 133.1L172.2 130.9L173.1 127.7M172.8 148.2L184.8 148.2L189.9 148.2L195.4 148.2M170.9 153.3L170.9 160.8L168.8 161.2L167.9 164.2L167.5 166.7L168.8 170.0L166.5 170.8L161.4 173.9L157.6 176.5L154.8 176.7M154.8 176.7L154.2 174.6L152.3 171.9L154.0 170.4L153.8 167.9L152.1 166.1L152.3 167.5L151.6 170.0L149.9 173.1L147.8 177.7L145.5 177.5L144.0 178.6L142.1 180.0L141.7 181.9M154.8 176.7L152.9 179.4L153.1 181.5L154.0 183.4L156.1 186.8L153.8 187.2L150.6 186.8L146.8 186.8L144.0 186.6M146.8 186.8L146.9 189.1L144.0 189.1M150.6 186.8L152.3 188.3L151.8 190.6L152.9 192.1L152.7 194.6L150.1 195.6L149.1 194.8L147.4 195.6L148.0 197.6L146.4 198.5M168.8 170.0L170.3 172.1L170.0 174.4L171.3 175.2L173.4 177.1L175.5 178.5L177.4 181.3L173.8 180.9L169.8 182.3L167.9 183.2L164.5 182.6L162.4 181.3L160.7 182.8L160.7 184.4L159.7 186.6L159.2 190.4L159.0 192.1L156.1 195.0L155.6 198.4L154.4 199.2L152.7 200.2L150.8 200.3L150.2 199.7L149.3 200.5L148.5 201.9M156.1 186.8L156.9 184.4L160.7 184.4M170.0 174.4L172.8 171.4L175.7 172.9L178.5 173.3L181.3 172.3L183.8 172.4L186.8 168.7L188.4 167.7L188.2 170.6L190.1 172.9M190.1 172.9L190.4 170.8L191.6 170.2L192.0 168.5L193.9 166.7L194.4 165.0L194.6 163.6L194.4 162.2L195.6 158.3L198.6 156.3M194.6 163.6L196.7 163.8L197.3 162.4L199.5 163.0L203.0 164.2L205.8 167.1L207.1 166.7M205.8 167.1L204.7 170.0L206.8 170.1L207.4 169.0M206.8 170.1L206.6 171.9L208.8 173.9L214.5 175.8L216.4 175.8L210.7 181.5L206.9 182.1L204.9 183.5L202.8 182.9L200.3 184.5L197.6 184.2L195.4 182.6L193.6 182.3L193.5 180.9M190.1 172.9L190.1 174.6L188.0 176.0L191.2 178.3L193.5 180.9L189.9 183.0L188.0 183.9L184.2 184.0L183.9 184.4L181.3 182.3L177.4 181.3M204.9 183.5L203.1 185.7L203.1 191.0L204.2 194.1M189.9 183.0L190.8 184.9L191.8 187.8L189.9 190.4L189.7 192.9L196.7 196.8L196.9 197.6L199.7 199.8M183.9 184.4L183.8 186.4L184.8 186.9L182.3 189.5L181.5 192.7L181.5 193.7L180.4 196.1L180.8 197.3L181.0 199.4M181.5 193.7L183.2 193.0L189.7 192.9M183.2 193.0L183.8 195.5L183.0 196.5L183.8 197.3L182.3 199.2L181.1 199.4M180.4 196.1L183.2 195.6M183.8 206.8L187.8 208.9L189.7 209.5L189.9 209.1M191.6 213.1L194.6 213.3L198.4 212.8L202.0 211.0M187.8 208.9L188.5 211.6L188.0 215.1L187.4 217.0L188.4 217.8L190.6 218.6L191.0 220.4L190.6 221.7L192.3 223.9L193.3 221.7L193.5 219.6L191.6 216.8L191.6 213.1M183.8 206.8L180.2 207.2L179.3 208.7L179.8 211.4L179.3 213.7L180.4 214.7L181.9 214.3L181.9 216.7L179.3 214.9L177.0 213.1L174.7 213.7L173.4 212.4L171.7 212.2L170.9 211.8M170.9 211.8L167.5 212.4L167.7 211.0L166.7 206.2L166.7 204.9L162.4 204.3L161.4 206.2L158.6 206.4L156.9 202.2L150.1 202.2L148.7 202.4M170.9 211.8L170.9 215.9L167.1 215.9L167.1 222.1L169.8 224.9M147.8 224.2L151.0 223.7L151.9 224.5L160.5 224.5L166.0 225.6L169.8 224.9L173.3 225.3M163.3 233.8L165.2 233.8L165.2 226.3L169.8 225.7L173.3 225.3M163.3 233.8L163.3 239.6L163.3 247.2L161.4 248.3L158.8 247.9L157.6 246.6L156.7 247.6M163.3 239.6L164.7 243.8L166.5 243.8L168.4 241.0L172.2 241.7L174.5 239.4L176.6 237.1L179.1 235.0L181.2 234.2M173.3 225.3L173.4 227.1L175.1 228.9L177.2 230.7L177.9 231.9L178.5 233.0L181.2 234.2L184.8 234.6M173.3 225.3L176.6 225.6L180.0 222.7L183.0 221.0L184.8 221.7L187.8 223.1L187.6 225.7L188.0 229.3L187.0 232.4L184.8 234.6L186.1 238.9L186.0 242.0L186.3 243.9L187.8 243.9M183.0 221.0L182.7 219.4L188.4 217.8M176.6 249.8L177.9 248.3L179.8 247.6L181.2 249.4L180.6 250.5L178.9 252.0L177.4 251.3L176.6 249.8M186.0 242.0L184.2 241.7L183.8 243.8L184.8 244.8L186.3 243.9M108.6 103.3L109.9 102.8L112.9 103.2L113.6 104.1L112.3 105.6L112.1 108.9L111.2 109.1L112.1 110.6L111.6 112.0L112.1 112.5L111.2 114.2L111.4 114.9M122.0 99.6L125.4 101.3L128.6 101.8L131.4 102.0M139.6 98.4L138.7 97.1L138.5 95.0L138.7 92.8L137.0 92.0L137.0 90.9L138.7 88.7L139.8 88.1L139.8 86.1L140.9 84.1L137.5 82.7L136.4 82.5L134.5 81.2L133.2 80.3L131.5 79.0L130.2 77.9M131.8 77.1L133.6 77.0L134.9 76.8L136.4 77.8L136.2 79.0L136.8 79.0L137.0 76.4L138.3 75.3L138.8 73.9L139.1 71.3M136.8 79.0L137.3 80.3L137.0 80.9L137.5 82.7M138.7 92.8L140.4 92.7L141.5 91.7L142.5 92.9L143.0 91.4L144.6 91.7L145.2 90.1L146.6 89.9L148.5 89.6L148.9 90.6L151.4 91.2L153.1 91.4L155.9 90.2M139.8 88.1L141.7 87.8L143.5 88.2L143.6 89.5L145.2 90.1M143.5 88.2L145.3 88.4L148.3 88.0L150.1 88.4L149.7 86.5L151.6 84.8L148.9 81.8L148.3 80.3L152.5 78.2L153.5 78.7L153.1 75.2L152.3 72.4L152.4 69.2M141.7 65.9L143.3 66.3M153.5 78.7L156.3 79.4L157.4 80.3L159.0 80.3L161.1 82.7L162.9 83.5L165.0 83.1L168.3 83.8L168.4 81.8L170.9 79.4L170.2 76.7L170.2 73.3L170.7 69.2L170.0 68.9L168.6 67.6L162.9 67.4M168.6 67.6L168.4 65.6L165.8 64.6L165.3 64.3M170.0 68.9L173.8 68.2L174.3 65.9L176.2 64.6L175.8 63.3L178.9 61.7L177.9 57.8L177.3 56.9L177.5 54.2L177.5 52.0L178.5 50.2M165.3 61.9L168.8 60.9L172.6 60.9L175.8 63.3M171.6 55.8L173.4 55.3L175.7 57.1L177.3 56.9M151.6 84.8L153.8 84.1L157.4 85.3L159.5 84.1L161.1 82.7M157.4 85.3L157.8 87.0L156.7 88.7L155.9 90.2M157.8 87.0L161.1 87.5L163.3 86.4L166.2 85.5L167.4 85.8L168.3 83.8M167.4 85.8L168.8 87.0L166.0 90.9L163.8 92.1L161.2 92.8L158.0 92.5L156.7 91.2L155.9 90.2M156.7 91.2L155.0 92.0L154.4 93.9L151.2 93.9M151.4 91.2L150.8 92.0L151.2 93.1L151.5 93.6M155.3 94.7L157.4 94.6L161.4 95.5L161.2 92.8M155.3 94.7L156.1 97.4L158.8 100.5L160.5 101.9M161.4 95.5L162.2 97.4L161.8 99.2L163.9 101.0L163.3 101.5L162.2 103.3M160.5 101.9L160.5 100.0L161.8 99.2M163.8 92.1L166.0 94.7L168.4 96.6L168.4 97.4L167.9 100.5L167.9 102.3L168.8 104.7M168.4 97.4L169.0 98.4L173.6 98.8L176.6 97.6L179.6 98.6M168.8 104.7L171.9 104.2L175.4 103.8L178.5 103.1M175.4 103.8L174.8 106.2M168.8 104.7L165.2 106.0L164.5 107.9L163.3 108.9M165.2 106.0L164.3 104.4L164.5 103.1L163.3 101.5M164.5 103.1L166.2 102.3L167.9 102.3M168.8 87.0L172.6 87.8L175.8 86.3L178.7 90.3L178.9 94.0L181.6 94.4M175.8 86.3L178.1 85.7L180.8 87.3L182.3 91.4L180.2 93.9L178.9 94.0M170.2 76.7L172.8 75.5L177.5 76.7L183.2 77.3L185.7 74.9L189.5 74.1L192.7 79.7L197.5 81.5L201.4 82.4L200.9 87.3L197.8 89.5M185.7 74.9L184.8 71.7L187.4 70.5L183.8 66.3L184.0 63.6L178.9 61.7M178.1 45.8L180.4 43.3L185.1 36.4L182.3 33.0L182.3 28.2L181.5 24.1L182.5 22.8L180.4 18.5L182.3 14.5L179.4 10.5L180.2 7.6L183.8 4.9M180.2 7.6L181.0 5.2L178.5 2.2L174.7 4.1L174.3 7.9L170.3 9.2L165.2 7.6L164.4 7.6M164.4 7.6L167.1 11.0L170.2 13.5L170.2 20.9L171.2 23.7M164.4 7.6L159.7 10.5L159.3 13.0L155.9 16.0L154.6 21.8L152.9 22.3L152.9 26.0L151.4 29.1L152.1 30.9L148.3 33.4L148.5 39.3L149.3 44.1L149.1 46.8L147.8 49.0L147.2 51.6L146.6 51.8M193.7 117.7L194.8 117.0L195.6 116.1L198.4 115.7L202.8 115.1L205.7 115.1L210.4 115.0L209.6 112.0L208.8 109.6L210.4 108.9L208.2 107.9L208.1 105.4L206.0 104.5L204.2 104.4M201.3 99.5L206.0 100.0L209.8 101.3L213.4 103.3L216.0 105.1L217.6 103.5M208.1 105.4L210.7 104.9L213.4 103.3M210.7 104.9L211.9 106.1L212.4 108.6L213.6 110.8M210.4 108.9L212.8 110.8L216.4 108.9L218.1 111.9M205.7 115.1L203.5 116.6L203.1 121.5L199.0 123.7L195.2 126.2L193.3 125.3M199.0 123.7L199.7 126.6L195.6 128.0L197.5 130.2L196.5 131.3L193.7 133.1L191.8 132.7M199.7 126.6L202.0 127.1L205.0 128.9L210.2 133.1L213.6 133.3L215.4 133.5L217.2 134.5M213.6 133.3L215.9 131.1L216.4 131.3M210.4 115.0L211.5 117.7L213.2 118.2L211.5 122.4L212.8 124.6L215.9 127.1L215.9 129.1L217.5 131.4M192.9 124.1L192.8 126.0L192.7 128.0L191.8 132.3M190.3 128.5L191.6 132.4M192.0 124.4L192.9 124.1L194.8 121.9L194.2 120.9L193.6 120.9M206.6 159.5L207.3 157.5L209.8 157.5L213.6 157.8L215.5 158.1L218.5 155.1L224.0 154.3L226.1 159.0M224.0 154.3L229.7 152.3L230.9 148.2L230.1 146.8L225.1 146.3L223.2 143.7M230.9 148.2L231.6 144.1L231.2 142.2L232.3 142.1M221.7 142.5L222.5 142.8M227.6 114.5L230.5 112.7L233.9 112.4L236.9 113.8L239.7 116.2L241.4 116.2L241.5 118.7L240.2 122.1L240.8 126.4L242.6 128.2L240.8 131.6L242.5 134.1L244.5 135.1L244.5 137.3L245.2 138.5L242.6 139.5L242.2 141.6M240.8 131.6L243.9 132.6L247.0 132.6L251.1 131.5L251.3 129.2L254.7 127.3L256.8 127.0L257.2 124.6L258.7 123.9L258.0 122.4L260.2 121.6L261.3 119.0L260.4 117.5L262.9 115.9L265.7 115.7L267.4 114.8M241.5 118.7L244.3 119.5L247.7 117.0L251.5 114.5L254.0 114.9L256.8 115.1L258.5 114.0L259.8 112.0L260.8 113.2L261.2 116.1L264.4 114.3L267.4 114.8M251.5 114.5L247.7 110.8L243.5 107.0L240.1 105.1L239.2 102.6L236.5 101.0L233.7 104.9L231.6 104.9L231.6 95.2L236.5 93.8L241.3 97.0L243.0 99.2L248.5 98.7L250.7 100.6L250.6 103.1L254.3 105.4L256.3 104.6L259.9 102.4M231.6 104.9L229.6 103.6L227.8 102.2L224.9 103.7M259.9 102.4L260.0 101.5L264.8 101.9L264.9 100.5L266.3 100.0L269.1 100.6L275.6 101.0L277.5 102.6L274.1 104.6L271.2 105.6L270.2 107.1L267.4 106.9L265.3 108.6L265.1 109.5L265.7 111.8L267.4 111.9L267.4 114.8M265.1 109.5L261.6 109.8L259.3 109.2L256.8 109.3L258.9 107.9L259.1 105.7L261.9 106.9L264.0 106.1L261.4 104.4L258.5 104.1L259.9 102.4M256.8 109.3L253.2 110.1L255.1 112.5L254.0 114.9M277.5 102.6L278.6 100.1L277.9 96.3L281.8 94.7L282.8 89.2L287.5 89.6L288.1 85.8L290.9 83.5M290.9 83.5L287.0 82.4L283.7 78.2L277.3 78.8L273.1 71.1L270.5 68.4L264.6 70.6L265.2 68.7L260.4 68.2L259.7 64.6L254.7 65.6L249.0 67.7L241.1 69.0L242.4 72.2L239.2 75.2L242.0 77.5L241.7 78.8L238.2 79.6L236.0 77.8L232.5 78.1L228.7 78.2L226.7 76.7L224.6 75.9L221.6 75.9L217.7 79.4L217.2 81.8L214.1 85.8L216.8 87.7L218.3 90.3L218.7 91.7M290.9 83.5L295.5 81.5L299.9 78.8L304.2 79.6L309.9 81.9L312.9 74.7L319.2 77.1L319.4 79.4L327.7 80.2L331.1 83.1L335.5 83.7L339.7 82.4L343.3 80.4L346.7 81.6M290.9 83.5L292.3 85.3L296.1 87.3L298.0 90.9L297.8 94.7L302.7 95.4L306.3 97.1L308.2 101.2L315.0 101.4L321.5 103.3L324.5 104.1L329.3 101.9L333.0 101.9L337.6 98.7L337.4 95.2L340.8 95.9L345.2 93.3L346.5 91.7L352.4 90.6L352.8 87.8L350.1 87.0L344.6 87.3L345.4 84.7L346.7 81.6M346.7 81.6L348.8 82.7L351.6 80.3L353.1 76.1L354.3 73.5L354.7 71.1L359.8 70.3L363.6 71.9L367.2 80.6L373.6 87.8L376.7 87.8L381.0 85.8L377.8 95.0L374.0 96.0L374.4 99.5L373.1 102.1L371.4 101.9L368.1 103.1L366.0 103.7L361.3 108.1M365.7 113.5L368.8 111.5M267.4 114.8L269.5 117.7L272.9 118.9L275.2 121.7L274.6 125.3L274.8 128.5L279.0 130.9L281.1 130.6L285.1 133.7L288.5 135.7L292.5 135.9L294.0 137.2L295.7 135.2L299.1 136.1L302.7 134.1L306.5 133.1L310.0 135.1M279.0 130.9L277.3 133.9L280.7 135.9L284.9 136.7L288.1 138.6L292.5 139.0L292.5 135.9M294.0 137.2L294.4 138.2L300.0 138.1L299.1 136.1M310.0 135.1L312.6 136.5L312.6 140.1L310.5 143.3L312.9 145.8L314.1 146.4L313.5 147.9L315.6 149.2L317.2 149.1L318.4 150.0L319.1 147.4L322.4 147.1L325.2 145.5L327.7 146.6L327.5 148.2L330.2 149.1M254.7 144.7L258.7 143.5L260.0 143.3L258.1 140.5L258.3 138.9L257.2 137.8L259.5 135.7L263.6 133.5L265.5 131.1L266.9 128.9L268.2 126.2L265.7 124.2L265.7 120.8L271.0 118.6L272.9 118.9M294.3 148.2L294.0 145.8L292.5 142.2L293.6 139.3L295.7 139.9L295.8 141.4L300.6 141.9L298.3 144.9L300.4 146.2L301.0 149.6L300.4 150.8M310.0 135.1L307.8 137.3L305.7 139.9L304.8 142.0L303.7 144.3L302.3 146.2L302.1 147.8L301.0 149.6M317.2 149.1L315.2 151.6L311.2 152.9L310.1 155.3L312.4 160.1L311.6 162.0L313.5 164.8L314.4 168.5L312.7 171.3M315.2 151.6L316.1 153.3L317.3 153.3L317.1 157.3L319.0 155.9L321.1 155.6L323.9 157.3L324.1 159.5L325.6 161.2L325.5 163.2L324.9 163.6L320.7 163.6L319.6 165.0L320.5 168.7M319.1 147.4L320.7 150.7L322.6 151.5L324.3 152.6L322.4 153.7L324.9 155.1L327.5 158.4L329.3 160.5L329.3 162.8L329.3 167.3L326.2 168.7L326.4 170.0L324.5 170.2L323.5 171.2M324.9 163.6L329.3 162.8M315.2 178.7L317.1 180.2L319.0 179.1M333.3 187.1L334.0 188.7L337.4 189.1L339.7 188.3L342.7 188.2L343.7 185.7L344.6 183.0L348.4 183.0M360.6 208.8L362.6 208.5L362.4 207.5M27.5 183.2L25.7 186.3L21.9 186.6L22.2 183.4L23.0 180.2M21.9 186.6L19.2 187.5L18.3 187.3L15.4 183.4L16.7 181.5L17.0 179.7M18.3 187.3L13.9 188.7L11.8 187.4L12.2 182.6L10.3 181.1L9.0 179.7L10.3 177.3L11.6 174.8M10.3 181.1L6.3 183.4L3.1 183.2L5.2 186.8L1.2 189.5L-1.5 188.7L-1.8 187.8L-7.0 188.9M15.0 230.0L15.7 234.0L19.8 234.4L20.3 237.9L22.4 238.0L21.9 241.2M0.2 209.7L1.4 209.5L1.6 213.3L6.3 215.9L10.7 217.4L11.2 222.3L14.8 222.3L15.0 224.5L16.4 226.1L15.0 230.0L13.3 228.3L8.4 228.9L6.7 234.3M6.7 234.3L9.7 237.5L16.2 240.6L14.3 244.7L19.2 245.0L21.9 241.2L23.4 244.5L19.6 247.1L16.2 251.1L15.0 256.2L14.7 259.5M6.7 234.3L3.5 234.0L1.8 234.0L-0.3 233.4L-2.0 235.4M16.2 251.1L19.2 252.4L23.0 254.9L24.1 258.9"/><path fill="none" stroke="#b08aa8" stroke-width="0.7" d="M392.8 195.9L392.8 204.1L392.5 204.1L392.8 208.3"/></svg><div class="mk" style="left:248.0px;top:70.0px;background-color:rgba(255,255,0,.74);border-color:rgba(255,255,0,.9)"></div><div class="mk" style="left:317.8px;top:79.5px;background-color:rgba(153,153,153,.74);border-color:rgba(153,153,153,.9)"></div><div class="mk" style="left:148.6px;top:90.0px;background-color:rgba(255,0,0,.74);border-color:rgba(255,0,0,.9)"></div><div class="mk" style="left:257.2px;top:92.2px;background-color:rgba(0,228,0,.74);border-color:rgba(0,228,0,.9)"></div><div class="mk" style="left:262.5px;top:91.2px;background-color:rgba(255,0,0,.74);border-color:rgba(255,0,0,.9)"></div><div class="mk" style="left:155.8px;top:93.0px;background-color:rgba(255,0,0,.74);border-color:rgba(255,0,0,.9)"></div><div class="mk" style="left:246.6px;top:96.2px;background-color:rgba(255,0,0,.74);border-color:rgba(255,0,0,.9)"></div><div class="mk" style="left:349.9px;top:95.4px;background-color:rgba(255,0,0,.74);border-color:rgba(255,0,0,.9)"></div><div class="mk" style="left:335.5px;top:99.7px;background-color:rgba(255,255,0,.74);border-color:rgba(255,255,0,.9)"></div><div class="mk" style="left:245.9px;top:102.9px;background-color:rgba(255,0,0,.74);border-color:rgba(255,0,0,.9)"></div><div class="mk" style="left:226.2px;top:104.0px;background-color:rgba(255,255,0,.74);border-color:rgba(255,255,0,.9)"></div><div class="mk" style="left:120.5px;top:107.0px;background-color:rgba(255,255,0,.74);border-color:rgba(255,255,0,.9)"></div><div class="mk" style="left:244.7px;top:111.1px;background-color:rgba(153,0,76,.74);border-color:rgba(153,0,76,.9)"></div><div class="mk" style="left:253.6px;top:113.6px;background-color:rgba(255,126,0,.74);border-color:rgba(255,126,0,.9)"></div><div class="mk" style="left:199.5px;top:115.1px;background-color:rgba(153,153,153,.74);border-color:rgba(153,153,153,.9)"></div><div class="mk" style="left:183.5px;top:117.8px;background-color:rgba(153,153,153,.74);border-color:rgba(153,153,153,.9)"></div><div class="mk" style="left:257.0px;top:120.0px;background-color:rgba(153,153,153,.74);border-color:rgba(153,153,153,.9)"></div><div class="mk" style="left:345.4px;top:119.7px;background-color:rgba(0,228,0,.74);border-color:rgba(0,228,0,.9)"></div><div class="mk" style="left:206.5px;top:124.2px;background-color:rgba(255,126,0,.74);border-color:rgba(255,126,0,.9)"></div><div class="mk" style="left:261.8px;top:125.3px;background-color:rgba(76,0,38,.74);border-color:rgba(76,0,38,.9)"></div><div class="mk" style="left:212.6px;top:130.6px;background-color:rgba(255,255,0,.74);border-color:rgba(255,255,0,.9)"></div><div class="mk" style="left:219.8px;top:132.5px;background-color:rgba(255,255,0,.74);border-color:rgba(255,255,0,.9)"></div><div class="mk" style="left:243.1px;top:133.3px;background-color:rgba(153,153,153,.74);border-color:rgba(153,153,153,.9)"></div><div class="mk" style="left:203.0px;top:133.8px;background-color:rgba(153,153,153,.74);border-color:rgba(153,153,153,.9)"></div><div class="mk" style="left:286.2px;top:135.5px;background-color:rgba(153,0,76,.74);border-color:rgba(153,0,76,.9)"></div><div class="mk" style="left:330.6px;top:137.0px;background-color:rgba(255,255,0,.74);border-color:rgba(255,255,0,.9)"></div><div class="mk" style="left:282.4px;top:139.2px;background-color:rgba(153,0,76,.74);border-color:rgba(153,0,76,.9)"></div><div class="mk" style="left:277.1px;top:127.7px;background-color:rgba(255,126,0,.74);border-color:rgba(255,126,0,.9)"></div><div class="mk" style="left:176.9px;top:152.2px;background-color:rgba(0,228,0,.74);border-color:rgba(0,228,0,.9)"></div><div class="mk" style="left:176.9px;top:152.2px;background-color:rgba(255,255,0,.74);border-color:rgba(255,255,0,.9)"></div><div class="mk" style="left:189.4px;top:140.4px;background-color:rgba(255,255,0,.74);border-color:rgba(255,255,0,.9)"></div><div class="mk" style="left:316.5px;top:141.3px;background-color:rgba(255,0,0,.74);border-color:rgba(255,0,0,.9)"></div><div class="mk" style="left:253.4px;top:145.3px;background-color:rgba(255,0,0,.74);border-color:rgba(255,0,0,.9)"></div><div class="mk" style="left:298.0px;top:149.9px;background-color:rgba(255,126,0,.74);border-color:rgba(255,126,0,.9)"></div><div class="mk" style="left:309.5px;top:147.4px;background-color:rgba(255,255,0,.74);border-color:rgba(255,255,0,.9)"></div><div class="mk" style="left:265.4px;top:148.3px;background-color:rgba(255,0,0,.74);border-color:rgba(255,0,0,.9)"></div><div class="mk" style="left:268.0px;top:156.4px;background-color:rgba(255,126,0,.74);border-color:rgba(255,126,0,.9)"></div><div class="mk" style="left:89.0px;top:164.0px;background-color:rgba(255,126,0,.74);border-color:rgba(255,126,0,.9)"></div><div class="mk" style="left:99.8px;top:158.0px;background-color:rgba(255,0,0,.74);border-color:rgba(255,0,0,.9)"></div><div class="mk" style="left:143.9px;top:158.9px;background-color:rgba(153,153,153,.74);border-color:rgba(153,153,153,.9)"></div><div class="mk" style="left:-15.5px;top:159.0px;background-color:rgba(255,255,0,.74);border-color:rgba(255,255,0,.9)"></div><div class="mk" style="left:317.9px;top:161.2px;background-color:rgba(255,255,0,.74);border-color:rgba(255,255,0,.9)"></div><div class="mk" style="left:188.3px;top:164.8px;background-color:rgba(153,153,153,.74);border-color:rgba(153,153,153,.9)"></div><div class="mk" style="left:188.3px;top:164.8px;background-color:rgba(255,255,0,.74);border-color:rgba(255,255,0,.9)"></div><div class="mk" style="left:267.1px;top:169.3px;background-color:rgba(255,255,0,.74);border-color:rgba(255,255,0,.9)"></div><div class="mk" style="left:114.6px;top:171.6px;background-color:rgba(255,126,0,.74);border-color:rgba(255,126,0,.9)"></div><div class="mk" style="left:107.1px;top:171.9px;background-color:rgba(255,255,0,.74);border-color:rgba(255,255,0,.9)"></div><div class="mk" style="left:176.8px;top:181.3px;background-color:rgba(153,153,153,.74);border-color:rgba(153,153,153,.9)"></div><div class="mk" style="left:317.8px;top:194.0px;background-color:rgba(255,255,0,.74);border-color:rgba(255,255,0,.9)"></div><div class="mk" style="left:3.9px;top:251.0px;background-color:rgba(0,228,0,.74);border-color:rgba(0,228,0,.9)"></div><span class="ml" style="left:307.8px;top:83.3px">N/A</span><span class="ml" style="left:138.6px;top:93.8px">166</span><span class="ml" style="left:252.5px;top:95.0px">159</span><span class="ml" style="left:236.6px;top:100.0px">153</span><span class="ml" style="left:339.9px;top:99.2px">171</span><span class="ml" style="left:325.5px;top:103.5px">61</span><span class="ml" style="left:235.9px;top:106.7px">159</span><span class="ml" style="left:216.2px;top:107.8px">72</span><span class="ml" style="left:110.5px;top:110.8px">60</span><span class="ml" style="left:234.7px;top:114.9px">301</span><span class="ml" style="left:189.5px;top:118.9px">N/A</span><span class="ml" style="left:173.5px;top:121.6px">N/A</span><span class="ml" style="left:247.0px;top:123.8px">N/A</span><span class="ml" style="left:335.4px;top:123.5px">40</span><span class="ml" style="left:251.8px;top:129.1px">314</span><span class="ml" style="left:233.1px;top:137.1px">N/A</span><span class="ml" style="left:193.0px;top:137.6px">N/A</span><span class="ml" style="left:320.6px;top:140.8px">75</span><span class="ml" style="left:272.4px;top:143.0px">207</span><span class="ml" style="left:267.1px;top:131.5px">144</span><span class="ml" style="left:166.9px;top:156.0px">62</span><span class="ml" style="left:179.4px;top:144.2px">78</span><span class="ml" style="left:306.5px;top:145.1px">161</span><span class="ml" style="left:288.0px;top:153.7px">146</span><span class="ml" style="left:299.5px;top:151.2px">71</span><span class="ml" style="left:255.4px;top:152.1px">184</span><span class="ml" style="left:258.0px;top:160.2px">119</span><span class="ml" style="left:79.0px;top:167.8px">115</span><span class="ml" style="left:133.9px;top:162.7px">N/A</span><span class="ml" style="left:307.9px;top:165.0px">92</span><span class="ml" style="left:178.3px;top:168.6px">N/A</span><span class="ml" style="left:257.1px;top:173.1px">52</span><span class="ml" style="left:104.6px;top:175.4px">105</span><span class="ml" style="left:166.8px;top:185.1px">N/A</span><span class="ml" style="left:307.8px;top:197.8px">66</span><span class="ml" style="left:-6.1px;top:254.8px">30</span><span class="ml" style="left:145.8px;top:96.8px">176</span><span class="ml" style="left:243.6px;top:117.4px">147</span><span class="ml" style="left:196.5px;top:128.0px">102</span><span class="ml" style="left:202.6px;top:134.4px">73</span><span class="ml" style="left:209.8px;top:136.3px">69</span><span class="ml" style="left:276.2px;top:139.3px">239</span><span class="ml" style="left:243.4px;top:149.1px">168</span><span class="ml" style="left:89.8px;top:161.8px">162</span><span class="ml" style="left:178.3px;top:168.6px">59</span><span class="ml" style="left:97.1px;top:175.7px">68</span><div class="pop"><div class="pt">Bishkek<br>2020-12-02 8:00 AM<br>(LT)</div><table cellspacing="0"><tr><th style="width:54px">Pollutant</th><th>AQI</th></tr><tr><td>PM2.5</td><td class="g">13</td></tr></table></div><div class="tip"></div>
</div>

<div class="abs bar" style="left:513px;top:3px;width:222px;height:23px;">Select a City</div>
<div class="abs sel" style="left:512px;top:27px;width:224px;height:25px;">Bishkek<span class="x">×</span><span class="car"></span></div>
<div class="abs bar" style="left:513px;top:66px;width:222px;height:23px;">Select a Parameter</div>
<div class="abs sel" style="left:512px;top:90px;width:224px;height:25px;">PM2.5<span class="x">×</span><span class="car"></span></div>

<div class="abs" style="left:512px;top:128px;width:224px;height:49px;background:#fff;border:1px solid #ccc;box-sizing:border-box;">
<div class="abs" style="left:7px;top:6px;font-size:9.33px;font-weight:bold;color:#333;line-height:12px;">Bishkek</div>
<svg class="abs" style="left:192px;top:17px" width="22.8" height="22.8" viewBox="0 0 22.8 22.8"><rect width="22.8" height="22.8" fill="#f3b33c"/><circle cx="4.9" cy="17.6" r="2.2" fill="#fff"/><path d="M3 9.9A9.6 9.6 0 0 1 12.6 19.5" fill="none" stroke="#fff" stroke-width="2.8"/><path d="M3 4.1A15.4 15.4 0 0 1 18.4 19.5" fill="none" stroke="#fff" stroke-width="3"/></svg>
</div>
<div class="abs note">Note: Values above 500 are considered Beyond the AQI. Follow recommendations for the Hazardous category. Additional information on reducing exposure to extremely high levels of particle pollution is available <a>here</a>.</div>

<div class="abs tab on" style="left:23px;width:72px;">AQI</div>
<div class="abs tab off" style="left:97px;width:111px;">Concentration</div>
<div class="abs tab off" style="left:210px;width:92px;">Historical</div>
<div class="abs" style="left:23px;top:334.6px;width:727px;height:0.9px;background:#aaa;"></div>
<div class="abs learn">Learn more about how the Air Quality Index [AQI] is calculated from the EPA <a>here</a>.</div>

<div class="abs chart">
<svg class="abs" style="left:0;top:0" width="531" height="199" viewBox="0 0 531 199"><text x="267.2" y="15.8" text-anchor="middle" font-size="12.6" fill="#333" font-family="Liberation Sans, Arial, sans-serif">Bishkek – PM2.5</text><path d="M49.7 138.12H527.3" stroke="#e6e6e6" stroke-width="0.8"/><path d="M49.7 113.94H527.3" stroke="#e6e6e6" stroke-width="0.8"/><path d="M49.7 89.76H527.3" stroke="#e6e6e6" stroke-width="0.8"/><path d="M49.7 65.58H527.3" stroke="#e6e6e6" stroke-width="0.8"/><path d="M49.7 41.40H527.3" stroke="#e6e6e6" stroke-width="0.8"/><text x="40.2" y="164.1" text-anchor="end" font-size="7.6" fill="#222" font-family="Liberation Sans, Arial, sans-serif">0</text><text x="40.2" y="139.9" text-anchor="end" font-size="7.6" fill="#222" font-family="Liberation Sans, Arial, sans-serif">100</text><text x="40.2" y="115.7" text-anchor="end" font-size="7.6" fill="#222" font-family="Liberation Sans, Arial, sans-serif">200</text><text x="40.2" y="91.6" text-anchor="end" font-size="7.6" fill="#222" font-family="Liberation Sans, Arial, sans-serif">300</text><text x="40.2" y="67.4" text-anchor="end" font-size="7.6" fill="#222" font-family="Liberation Sans, Arial, sans-serif">400</text><text x="40.2" y="43.2" text-anchor="end" font-size="7.6" fill="#222" font-family="Liberation Sans, Arial, sans-serif">500</text><text transform="translate(18.9,98.5) rotate(-90)" text-anchor="middle" font-size="7.6" fill="#222" font-family="Liberation Sans, Arial, sans-serif">AQI</text><rect x="54.55" y="125.30" width="10.2" height="36.70" fill="#ff0000" stroke="rgba(30,20,20,.75)" stroke-width="0.8"/><rect x="74.45" y="125.55" width="10.2" height="36.45" fill="#ff0000" stroke="rgba(30,20,20,.75)" stroke-width="0.8"/><rect x="94.35" y="123.37" width="10.2" height="38.63" fill="#ff0000" stroke="rgba(30,20,20,.75)" stroke-width="0.8"/><rect x="114.25" y="83.23" width="10.2" height="78.77" fill="#4c0026" stroke="rgba(30,20,20,.75)" stroke-width="0.8"/><rect x="134.15" y="61.95" width="10.2" height="100.05" fill="#4c0026" stroke="rgba(30,20,20,.75)" stroke-width="0.8"/><rect x="154.05" y="66.79" width="10.2" height="95.21" fill="#4c0026" stroke="rgba(30,20,20,.75)" stroke-width="0.8"/><rect x="173.95" y="64.85" width="10.2" height="97.15" fill="#4c0026" stroke="rgba(30,20,20,.75)" stroke-width="0.8"/><rect x="193.85" y="66.06" width="10.2" height="95.94" fill="#4c0026" stroke="rgba(30,20,20,.75)" stroke-width="0.8"/><rect x="213.75" y="73.32" width="10.2" height="88.68" fill="#4c0026" stroke="rgba(30,20,20,.75)" stroke-width="0.8"/><rect x="233.65" y="77.91" width="10.2" height="84.09" fill="#4c0026" stroke="rgba(30,20,20,.75)" stroke-width="0.8"/><rect x="253.55" y="80.09" width="10.2" height="81.91" fill="#4c0026" stroke="rgba(30,20,20,.75)" stroke-width="0.8"/><rect x="273.45" y="79.12" width="10.2" height="82.88" fill="#4c0026" stroke="rgba(30,20,20,.75)" stroke-width="0.8"/><rect x="293.35" y="100.40" width="10.2" height="61.60" fill="#99004c" stroke="rgba(30,20,20,.75)" stroke-width="0.8"/><rect x="313.25" y="110.55" width="10.2" height="51.45" fill="#99004c" stroke="rgba(30,20,20,.75)" stroke-width="0.8"/><rect x="333.15" y="119.26" width="10.2" height="42.74" fill="#ff0000" stroke="rgba(30,20,20,.75)" stroke-width="0.8"/><rect x="353.05" y="123.37" width="10.2" height="38.63" fill="#ff0000" stroke="rgba(30,20,20,.75)" stroke-width="0.8"/><rect x="372.95" y="126.76" width="10.2" height="35.24" fill="#ff7e00" stroke="rgba(30,20,20,.75)" stroke-width="0.8"/><rect x="392.85" y="126.51" width="10.2" height="35.49" fill="#ff7e00" stroke="rgba(30,20,20,.75)" stroke-width="0.8"/><rect x="412.75" y="134.01" width="10.2" height="27.99" fill="#ff7e00" stroke="rgba(30,20,20,.75)" stroke-width="0.8"/><rect x="432.65" y="143.44" width="10.2" height="18.56" fill="#ffff00" stroke="rgba(30,20,20,.75)" stroke-width="0.8"/><rect x="452.55" y="144.89" width="10.2" height="17.11" fill="#ffff00" stroke="rgba(30,20,20,.75)" stroke-width="0.8"/><rect x="472.45" y="151.18" width="10.2" height="10.82" fill="#00e400" stroke="rgba(30,20,20,.75)" stroke-width="0.8"/><rect x="492.35" y="156.50" width="10.2" height="5.50" fill="#00e400" stroke="rgba(30,20,20,.75)" stroke-width="0.8"/><rect x="512.25" y="159.16" width="10.2" height="2.84" fill="#00e400" stroke="rgba(30,20,20,.75)" stroke-width="0.8"/><path d="M49.7 162.30H527.3" stroke="#ccd6eb" stroke-width="0.8"/><path d="M49.70 162.30v6.5M69.60 162.30v6.5M89.50 162.30v6.5M109.40 162.30v6.5M129.30 162.30v6.5M149.20 162.30v6.5M169.10 162.30v6.5M189.00 162.30v6.5M208.90 162.30v6.5M228.80 162.30v6.5M248.70 162.30v6.5M268.60 162.30v6.5M288.50 162.30v6.5M308.40 162.30v6.5M328.30 162.30v6.5M348.20 162.30v6.5M368.10 162.30v6.5M388.00 162.30v6.5M407.90 162.30v6.5M427.80 162.30v6.5M447.70 162.30v6.5M467.60 162.30v6.5M487.50 162.30v6.5M507.40 162.30v6.5M527.30 162.30v6.5" stroke="#ccd6eb" stroke-width="0.8" fill="none"/><text transform="translate(61.1,173.0) rotate(-45)" text-anchor="end" font-size="7.5" fill="#666" font-family="Liberation Sans, Arial, sans-serif">9 AM</text><text transform="translate(81.0,173.0) rotate(-45)" text-anchor="end" font-size="7.5" fill="#666" font-family="Liberation Sans, Arial, sans-serif">10 AM</text><text transform="translate(100.9,173.0) rotate(-45)" text-anchor="end" font-size="7.5" fill="#666" font-family="Liberation Sans, Arial, sans-serif">11 AM</text><text transform="translate(120.8,173.0) rotate(-45)" text-anchor="end" font-size="7.5" fill="#666" font-family="Liberation Sans, Arial, sans-serif">12 PM</text><text transform="translate(140.7,173.0) rotate(-45)" text-anchor="end" font-size="7.5" fill="#666" font-family="Liberation Sans, Arial, sans-serif">1 PM</text><text transform="translate(160.5,173.0) rotate(-45)" text-anchor="end" font-size="7.5" fill="#666" font-family="Liberation Sans, Arial, sans-serif">2 PM</text><text transform="translate(180.5,173.0) rotate(-45)" text-anchor="end" font-size="7.5" fill="#666" font-family="Liberation Sans, Arial, sans-serif">3 PM</text><text transform="translate(200.3,173.0) rotate(-45)" text-anchor="end" font-size="7.5" fill="#666" font-family="Liberation Sans, Arial, sans-serif">4 PM</text><text transform="translate(220.2,173.0) rotate(-45)" text-anchor="end" font-size="7.5" fill="#666" font-family="Liberation Sans, Arial, sans-serif">5 PM</text><text transform="translate(240.2,173.0) rotate(-45)" text-anchor="end" font-size="7.5" fill="#666" font-family="Liberation Sans, Arial, sans-serif">6 PM</text><text transform="translate(260.0,173.0) rotate(-45)" text-anchor="end" font-size="7.5" fill="#666" font-family="Liberation Sans, Arial, sans-serif">7 PM</text><text transform="translate(279.9,173.0) rotate(-45)" text-anchor="end" font-size="7.5" fill="#666" font-family="Liberation Sans, Arial, sans-serif">8 PM</text><text transform="translate(299.8,173.0) rotate(-45)" text-anchor="end" font-size="7.5" fill="#666" font-family="Liberation Sans, Arial, sans-serif">9 PM</text><text transform="translate(319.7,173.0) rotate(-45)" text-anchor="end" font-size="7.5" fill="#666" font-family="Liberation Sans, Arial, sans-serif">10 PM</text><text transform="translate(339.6,173.0) rotate(-45)" text-anchor="end" font-size="7.5" fill="#666" font-family="Liberation Sans, Arial, sans-serif">11 PM</text><text transform="translate(359.5,173.0) rotate(-45)" text-anchor="end" font-size="7.5" fill="#666" font-family="Liberation Sans, Arial, sans-serif">Dec 2, 2020 12 AM</text><text transform="translate(379.4,173.0) rotate(-45)" text-anchor="end" font-size="7.5" fill="#666" font-family="Liberation Sans, Arial, sans-serif">1 AM</text><text transform="translate(399.3,173.0) rotate(-45)" text-anchor="end" font-size="7.5" fill="#666" font-family="Liberation Sans, Arial, sans-serif">2 AM</text><text transform="translate(419.2,173.0) rotate(-45)" text-anchor="end" font-size="7.5" fill="#666" font-family="Liberation Sans, Arial, sans-serif">3 AM</text><text transform="translate(439.1,173.0) rotate(-45)" text-anchor="end" font-size="7.5" fill="#666" font-family="Liberation Sans, Arial, sans-serif">4 AM</text><text transform="translate(459.0,173.0) rotate(-45)" text-anchor="end" font-size="7.5" fill="#666" font-family="Liberation Sans, Arial, sans-serif">5 AM</text><text transform="translate(478.9,173.0) rotate(-45)" text-anchor="end" font-size="7.5" fill="#666" font-family="Liberation Sans, Arial, sans-serif">6 AM</text><text transform="translate(498.8,173.0) rotate(-45)" text-anchor="end" font-size="7.5" fill="#666" font-family="Liberation Sans, Arial, sans-serif">7 AM</text><text transform="translate(518.8,173.0) rotate(-45)" text-anchor="end" font-size="7.5" fill="#666" font-family="Liberation Sans, Arial, sans-serif">8 AM</text></svg>
</div>

<div class="abs cc">
<div class="top">
<div style="font-size:10px;line-height:12px;margin-top:4.5px;">Current Conditions</div>
<div style="font-size:8px;line-height:14px;">observed at</div>
<div style="font-size:10px;line-height:14px;">Dec 2, 2020 8:00 AM (LT)</div>
</div>
<div class="grn">
<div style="font-size:13.33px;line-height:19px;margin-top:9.5px;">13 AQI</div>
<div style="font-size:13.33px;line-height:19px;">Good</div>
<div style="font-size:13.33px;line-height:19px;">PM2.5</div>
</div>
<div class="abs" style="left:0;top:133px;width:100%;text-align:center;font-size:8px;font-weight:bold;color:#222;line-height:10px;">Health Message</div>
<div class="abs" style="left:3.5px;top:146.5px;width:165px;font-size:8px;line-height:14px;color:#555;white-space:nowrap;">The AQI value for your community is<br>between 0 and 50. Air quality is satisfactory<br>and poses little or no health risk.</div>
</div>
</body>
</html>
